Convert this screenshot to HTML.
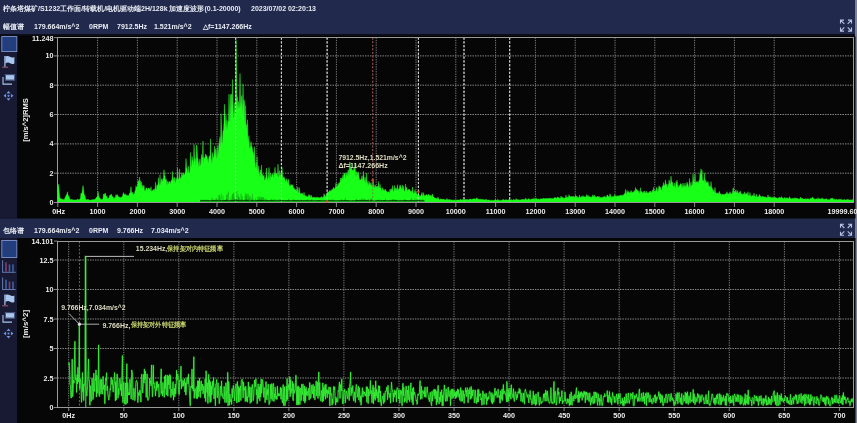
<!DOCTYPE html>
<html><head><meta charset="utf-8"><style>
html,body{margin:0;padding:0;width:857px;height:423px;overflow:hidden;background:#000;position:relative;font-family:"Liberation Sans",sans-serif}
.hd{position:absolute;left:0;width:857px;background:#212a4c}
.sb{position:absolute;left:0;width:17px;background:#171a32}
.t{position:absolute;white-space:nowrap;color:#e8ebf4;font-size:7px;line-height:10px;font-weight:bold;will-change:transform}
</style></head><body>
<div class="hd" style="top:0;height:34.3px"></div>
<div style="position:absolute;left:0;top:34.3px;width:857px;height:2.2px;background:#0c0d18"></div>
<div class="hd" style="top:218.4px;height:19.6px"></div>
<div class="sb" style="top:36.5px;height:182px"></div>
<div class="sb" style="top:238px;height:185px"></div>
<div style="position:absolute;left:855.3px;top:0;width:1.7px;height:423px;background:#7c8196"></div>
<svg width="857" height="423" viewBox="0 0 857 423" style="position:absolute;left:0;top:0;will-change:transform">
<style>
.g{stroke:#8c8c8c;stroke-width:1;stroke-dasharray:1.4 1.1}
.cur{stroke:#e4e4e4;stroke-width:1;stroke-dasharray:2.2 1.6}
.curr{stroke:#8c4a4a;stroke-width:1.1;stroke-dasharray:2 1.6}
.gv{stroke:#7c7c7c;stroke-width:1;stroke-dasharray:1.3 1.1}
text{font-family:"Liberation Sans",sans-serif;font-weight:bold}
</style>
<rect x="17" y="36.5" width="838.5" height="182" fill="#060606"/>
<line x1="57.5" y1="173.2" x2="853.5" y2="173.2" class="g"/><line x1="57.5" y1="143.9" x2="853.5" y2="143.9" class="g"/><line x1="57.5" y1="114.5" x2="853.5" y2="114.5" class="g"/><line x1="57.5" y1="85.2" x2="853.5" y2="85.2" class="g"/><line x1="57.5" y1="55.9" x2="853.5" y2="55.9" class="g"/><line x1="97.6" y1="37.5" x2="97.6" y2="202.5" class="gv"/><line x1="137.4" y1="37.5" x2="137.4" y2="202.5" class="gv"/><line x1="177.2" y1="37.5" x2="177.2" y2="202.5" class="gv"/><line x1="217.0" y1="37.5" x2="217.0" y2="202.5" class="gv"/><line x1="256.8" y1="37.5" x2="256.8" y2="202.5" class="gv"/><line x1="296.6" y1="37.5" x2="296.6" y2="202.5" class="gv"/><line x1="336.4" y1="37.5" x2="336.4" y2="202.5" class="gv"/><line x1="376.2" y1="37.5" x2="376.2" y2="202.5" class="gv"/><line x1="416.0" y1="37.5" x2="416.0" y2="202.5" class="gv"/><line x1="455.8" y1="37.5" x2="455.8" y2="202.5" class="gv"/><line x1="495.6" y1="37.5" x2="495.6" y2="202.5" class="gv"/><line x1="535.4" y1="37.5" x2="535.4" y2="202.5" class="gv"/><line x1="575.2" y1="37.5" x2="575.2" y2="202.5" class="gv"/><line x1="615.0" y1="37.5" x2="615.0" y2="202.5" class="gv"/><line x1="654.8" y1="37.5" x2="654.8" y2="202.5" class="gv"/><line x1="694.6" y1="37.5" x2="694.6" y2="202.5" class="gv"/><line x1="734.4" y1="37.5" x2="734.4" y2="202.5" class="gv"/><line x1="774.2" y1="37.5" x2="774.2" y2="202.5" class="gv"/>
<line x1="235.7" y1="37.5" x2="235.7" y2="202.5" class="cur"/><line x1="281.4" y1="37.5" x2="281.4" y2="202.5" class="cur"/><line x1="327.1" y1="37.5" x2="327.1" y2="202.5" class="cur"/><line x1="418.4" y1="37.5" x2="418.4" y2="202.5" class="cur"/><line x1="464.0" y1="37.5" x2="464.0" y2="202.5" class="cur"/><line x1="509.7" y1="37.5" x2="509.7" y2="202.5" class="cur"/><line x1="372.7" y1="37.5" x2="372.7" y2="202.5" class="curr"/>
<path d="M58 202.2L58 184.9L58.5 184.3L59 189.3L59.5 195.1L60 198.7L60.5 198.2L61 199.5L61.5 198.8L62 199L62.5 199.4L63 199.6L63.5 199.6L64 199.7L64.5 199.5L65 197.4L65.5 197.3L66 195.4L66.5 194.7L67 194L67.5 191.8L68 195.1L68.5 196.2L69 196.3L69.5 198.3L70 199.3L70.5 199.7L71 199.8L71.5 199.3L72 199.6L72.5 199.7L73 199.7L73.5 200L74 200.2L74.5 200L75 199.6L75.5 200L76 199.8L76.5 200.2L77 199.4L77.5 199.1L78 199.9L78.5 199.4L79 199.7L79.5 199.4L80 199.6L80.5 197.6L81 193.1L81.5 194.3L82 192.6L82.5 189.5L83 185.6L83.5 189L84 194.1L84.5 194.8L85 196.6L85.5 198.6L86 199.6L86.5 200L87 199.5L87.5 199.8L88 199.2L88.5 199.8L89 199.8L89.5 200.3L90 200L90.5 200.2L91 200L91.5 200.2L92 199.4L92.5 200.1L93 199.6L93.5 199.9L94 199.1L94.5 199.5L95 200L95.5 198.5L96 198.2L96.5 197.2L97 196.8L97.5 196.7L98 191.3L98.5 195L99 196.7L99.5 198.1L100 198L100.5 199.2L101 199.2L101.5 199.4L102 199.3L102.5 199.5L103 198.6L103.5 194L104 195.4L104.5 193.9L105 193.3L105.5 193.3L106 196.3L106.5 196.7L107 195.8L107.5 199.3L108 198.3L108.5 198.6L109 198L109.5 195.4L110 195.3L110.5 195.5L111 193.9L111.5 194.5L112 196.1L112.5 196.6L113 197L113.5 197.7L114 198.7L114.5 197.5L115 198.8L115.5 196.8L116 194.5L116.5 196.4L117 194.9L117.5 194.7L118 197.1L118.5 196.6L119 197.1L119.5 197.5L120 197.1L120.5 197.8L121 197.8L121.5 197L122 196.9L122.5 196.1L123 194.1L123.5 192.6L124 194.6L124.5 195.1L125 193.7L125.5 195.3L126 194.4L126.5 195.8L127 196.1L127.5 195.2L128 195.4L128.5 195.7L129 195.2L129.5 193.1L130 193.6L130.5 191L131 186.7L131.5 192.4L132 192.7L132.5 192.1L133 194.7L133.5 193.9L134 194.1L134.5 193.9L135 190.7L135.5 190.4L136 185.5L136.5 188L137 186.9L137.5 186.9L138 180.5L138.5 181.3L139 182.4L139.5 177L140 185.1L140.5 180.6L141 187.3L141.5 182.1L142 189L142.5 186.2L143 184.9L143.5 188.1L144 185.5L144.5 190.5L145 191.2L145.5 189.7L146 188.3L146.5 188.1L147 188.5L147.5 191.2L148 187.9L148.5 188.4L149 188.2L149.5 189.7L150 188.2L150.5 191.7L151 186.7L151.5 191.7L152 190.7L152.5 190.6L153 190.8L153.5 189.2L154 191.4L154.5 188.9L155 190.7L155.5 182.1L156 190.4L156.5 188.5L157 184.8L157.5 186.2L158 184.2L158.5 177.7L159 184.1L159.5 186L160 174.6L160.5 186.5L161 181.8L161.5 179.2L162 178.4L162.5 182.8L163 179.3L163.5 178.1L164 169.8L164.5 175.6L165 175.9L165.5 181.1L166 178.8L166.5 180.6L167 186L167.5 181.9L168 180.9L168.5 185L169 182.3L169.5 181.7L170 181.6L170.5 184.8L171 180.7L171.5 180.7L172 179.1L172.5 171.4L173 182L173.5 179L174 177.7L174.5 177.2L175 182.3L175.5 183L176 178L176.5 181.1L177 178L177.5 167.5L178 178.9L178.5 179.6L179 177.6L179.5 168.9L180 180L180.5 177.4L181 179.2L181.5 174.3L182 172.5L182.5 175.8L183 175.2L183.5 172.9L184 175.3L184.5 174.4L185 172.9L185.5 170.9L186 158.5L186.5 166.9L187 168.6L187.5 171.4L188 173.7L188.5 166.1L189 172.8L189.5 172.7L190 172.6L190.5 152.5L191 161.8L191.5 168.4L192 156.3L192.5 159.5L193 161.2L193.5 166L194 144.4L194.5 155.8L195 162.8L195.5 158.4L196 166.7L196.5 145.3L197 145.3L197.5 156.8L198 159.4L198.5 163.6L199 167.7L199.5 161.8L200 158.8L200.5 166.1L201 165L201.5 154.5L202 158.3L202.5 156.2L203 140.9L203.5 165.5L204 157.1L204.5 159.1L205 157.9L205.5 154L206 154.7L206.5 155.8L207 156.6L207.5 161.7L208 158.2L208.5 164.4L209 156.3L209.5 156.2L210 156.5L210.5 138.9L211 160.6L211.5 159.6L212 164.8L212.5 152.6L213 156.6L213.5 158.5L214 155.8L214.5 145.9L215 157.5L215.5 150.2L216 148.4L216.5 156.3L217 159.8L217.5 149.6L218 145.4L218.5 157L219 145.2L219.5 140.8L220 136.6L220.5 149.8L221 113.6L221.5 128.2L222 144.6L222.5 141.4L223 130.5L223.5 131.4L224 122.1L224.5 104.3L225 114.9L225.5 131.1L226 115.4L226.5 132.5L227 120.3L227.5 131L228 122L228.5 120.7L229 94L229.5 113.8L230 124.3L230.5 94.7L231 96.3L231.5 93.9L232 113.4L232.5 79.4L233 104L233.5 116L234 118.6L234.5 102.9L235 114.8L235.5 112.7L236 39.8L236.5 72.3L237 112.3L237.5 96.6L238 109.9L238.5 101.5L239 109.6L239.5 102.2L240 73.5L240.5 99.3L241 108.3L241.5 96.9L242 95.5L242.5 118L243 83.8L243.5 107.5L244 99.7L244.5 103.4L245 125.4L245.5 105.6L246 130.1L246.5 124.5L247 126.9L247.5 119.7L248 142.7L248.5 139L249 135.5L249.5 149L250 148L250.5 146.3L251 141.6L251.5 145.7L252 146.7L252.5 149.8L253 152.7L253.5 152.6L254 157.1L254.5 146.8L255 165.9L255.5 168.5L256 162.3L256.5 170.4L257 156.6L257.5 167.4L258 171.3L258.5 165.9L259 175L259.5 172.4L260 177.4L260.5 169.8L261 174.1L261.5 165.1L262 177.9L262.5 174.1L263 175.6L263.5 176.8L264 175L264.5 179.7L265 180.4L265.5 178.1L266 176.8L266.5 168L267 177.5L267.5 180.8L268 177.9L268.5 175.9L269 167.5L269.5 175.7L270 181.3L270.5 173.2L271 176.9L271.5 177.1L272 174.1L272.5 175.5L273 173.4L273.5 178.8L274 174.2L274.5 173.9L275 167.3L275.5 174.4L276 174.6L276.5 172.9L277 173.7L277.5 178.1L278 164L278.5 176.7L279 176.9L279.5 170.6L280 176.9L280.5 175.2L281 173.2L281.5 174.2L282 167.4L282.5 174.8L283 178.2L283.5 177.6L284 176.8L284.5 178.5L285 179.4L285.5 181.7L286 181.2L286.5 178.7L287 181.1L287.5 184L288 179.9L288.5 179.2L289 185L289.5 186.4L290 184.4L290.5 187.1L291 185.1L291.5 185.8L292 184.3L292.5 187L293 184.9L293.5 189.3L294 187.6L294.5 189.2L295 189.7L295.5 189.5L296 189.8L296.5 190.5L297 191.4L297.5 187.1L298 192.5L298.5 192.8L299 187.4L299.5 189.6L300 193.5L300.5 193.5L301 193.9L301.5 193.6L302 192.9L302.5 193.3L303 194.9L303.5 195.5L304 192.3L304.5 195.4L305 195.3L305.5 196.8L306 195.4L306.5 196.7L307 196.4L307.5 197.1L308 196.8L308.5 196.1L309 194.4L309.5 197L310 194.9L310.5 197.2L311 197.5L311.5 195.3L312 197.9L312.5 197.8L313 197.2L313.5 197.1L314 198.2L314.5 197.2L315 197L315.5 197.7L316 198.3L316.5 197.3L317 196.8L317.5 197.4L318 197.8L318.5 197.4L319 198.1L319.5 197.7L320 197.7L320.5 197.3L321 197.9L321.5 196.5L322 197.5L322.5 197.3L323 197.3L323.5 197.5L324 193.7L324.5 195L325 195.8L325.5 196.4L326 196.1L326.5 195.1L327 193.5L327.5 191.7L328 191.9L328.5 192.2L329 191.8L329.5 190.7L330 190.2L330.5 191.3L331 191.2L331.5 190L332 189.3L332.5 190.4L333 188.6L333.5 187.2L334 189.2L334.5 188.7L335 188.1L335.5 187.1L336 182.9L336.5 187.7L337 186.4L337.5 186.1L338 183.7L338.5 186L339 182.4L339.5 183.8L340 182.4L340.5 177.9L341 181.7L341.5 177.7L342 178.7L342.5 178.3L343 174.7L343.5 179.8L344 173.1L344.5 173L345 174.6L345.5 179.6L346 174L346.5 174.2L347 172.3L347.5 177.1L348 169.9L348.5 170.2L349 177.1L349.5 163.2L350 162L350.5 169.3L351 168.2L351.5 167.1L352 170.5L352.5 170.1L353 170L353.5 171.2L354 167.5L354.5 171.1L355 164.4L355.5 172L356 177.7L356.5 171.5L357 172.2L357.5 175.2L358 171.7L358.5 173.1L359 177.2L359.5 179.8L360 179.7L360.5 179.8L361 179.4L361.5 178.8L362 175.6L362.5 181.2L363 177.1L363.5 171.3L364 178.7L364.5 182.4L365 177L365.5 180.6L366 184.3L366.5 173.2L367 181.2L367.5 182.1L368 185.2L368.5 185L369 181.1L369.5 185.3L370 182.9L370.5 186.5L371 182.6L371.5 186.9L372 184.8L372.5 187.7L373 178.8L373.5 183.7L374 188.1L374.5 187.4L375 185L375.5 186.1L376 187.9L376.5 186.6L377 187.7L377.5 186L378 189L378.5 181.6L379 187.7L379.5 187.4L380 184.2L380.5 187.9L381 188.2L381.5 189.7L382 191.5L382.5 187.7L383 188.9L383.5 191.2L384 189.2L384.5 191.2L385 190.6L385.5 189.2L386 190.8L386.5 191.5L387 191.5L387.5 192.4L388 192L388.5 191.8L389 192.2L389.5 192.7L390 189L390.5 192L391 188.8L391.5 188.9L392 191.3L392.5 185.5L393 190L393.5 191.6L394 191.2L394.5 185.4L395 189.4L395.5 187.9L396 191L396.5 188.7L397 187.4L397.5 184.7L398 191.1L398.5 188.7L399 189.3L399.5 187.5L400 184.8L400.5 185.7L401 187.5L401.5 189.1L402 189.3L402.5 184.9L403 190.2L403.5 186.2L404 190.1L404.5 191.2L405 191.6L405.5 184L406 188.2L406.5 187.3L407 189.6L407.5 190.9L408 190L408.5 189.3L409 190L409.5 189.3L410 190.3L410.5 192L411 190.8L411.5 191.5L412 192.9L412.5 186.9L413 191.4L413.5 193.9L414 192.9L414.5 192.7L415 189.6L415.5 194.5L416 191.5L416.5 194.1L417 193.9L417.5 194.5L418 195.8L418.5 194.2L419 194.2L419.5 196.3L420 196.1L420.5 196.3L421 194.7L421.5 194.5L422 192.3L422.5 195.8L423 196L423.5 192.7L424 194.3L424.5 196.2L425 196L425.5 195.2L426 195L426.5 194.5L427 195.2L427.5 195.9L428 195.3L428.5 194L429 194.7L429.5 196.4L430 195L430.5 196.3L431 195.4L431.5 197.2L432 194.4L432.5 194L433 196.9L433.5 196.7L434 197.1L434.5 197.9L435 198.1L435.5 198L436 198.6L436.5 198.5L437 198.8L437.5 198.5L438 196.9L438.5 198.7L439 199.2L439.5 199.7L440 199.5L440.5 199.1L441 198.7L441.5 199.5L442 199.2L442.5 199.6L443 199.1L443.5 199.1L444 199.7L444.5 199.4L445 199.9L445.5 200L446 199.7L446.5 199.6L447 198.4L447.5 200.1L448 199.6L448.5 199.8L449 200.2L449.5 199.5L450 199.4L450.5 200.2L451 199.6L451.5 200.3L452 200.3L452.5 200.2L453 199.7L453.5 200.5L454 199.8L454.5 200.1L455 200.5L455.5 200.2L456 200.3L456.5 200.2L457 200L457.5 200L458 199.7L458.5 200.3L459 199.8L459.5 200.1L460 199.6L460.5 199.6L461 199.5L461.5 200.1L462 199.9L462.5 199.4L463 199.4L463.5 199.9L464 199.3L464.5 199.8L465 199.8L465.5 199.4L466 199.6L466.5 199.6L467 199.6L467.5 199.6L468 199.8L468.5 199.9L469 199.2L469.5 199.3L470 199.2L470.5 199L471 199.5L471.5 199.4L472 199.3L472.5 199.3L473 198.7L473.5 199.1L474 199.1L474.5 198.6L475 199.1L475.5 199.2L476 198.6L476.5 198.6L477 197.7L477.5 198.8L478 199.5L478.5 199.2L479 199L479.5 199.4L480 199.4L480.5 199.2L481 199.2L481.5 199.7L482 199.2L482.5 199.9L483 199.1L483.5 199.9L484 199.9L484.5 200L485 199.3L485.5 200L486 199.7L486.5 199.5L487 199.6L487.5 200.4L488 200L488.5 200L489 200L489.5 200.3L490 200.4L490.5 200.6L491 200.6L491.5 200.2L492 200.5L492.5 200.4L493 200.3L493.5 200.5L494 200.5L494.5 199.8L495 200.2L495.5 199.5L496 200L496.5 200.5L497 200.3L497.5 199.4L498 199.8L498.5 200L499 200.4L499.5 200.2L500 200.4L500.5 200.3L501 200.4L501.5 200.3L502 199.9L502.5 200.3L503 199.2L503.5 199.7L504 200.1L504.5 200.1L505 200.3L505.5 199.7L506 199.8L506.5 199.9L507 199.8L507.5 200.3L508 200.1L508.5 199.8L509 199.5L509.5 199.1L510 199.8L510.5 199.9L511 200.3L511.5 199.5L512 200.2L512.5 200.2L513 199.7L513.5 199.6L514 199.6L514.5 199.9L515 200.1L515.5 200.2L516 198.5L516.5 199.4L517 200L517.5 199.4L518 199.8L518.5 199.9L519 199.7L519.5 200.2L520 199.8L520.5 200L521 199.5L521.5 199.7L522 199.3L522.5 199.3L523 199.8L523.5 199.8L524 199.1L524.5 199.5L525 199.9L525.5 198.1L526 198.6L526.5 199.4L527 199.9L527.5 199.4L528 199.4L528.5 198.6L529 198.9L529.5 198.9L530 199.7L530.5 199.7L531 199.4L531.5 198.9L532 199.1L532.5 199L533 199.1L533.5 199.5L534 197.8L534.5 199.7L535 198.9L535.5 199.4L536 198.3L536.5 198.5L537 199L537.5 199.5L538 199.1L538.5 198.8L539 199.5L539.5 199.2L540 199.5L540.5 198.8L541 199L541.5 198.8L542 199.1L542.5 198.6L543 199.2L543.5 198.3L544 198.2L544.5 198.7L545 198.7L545.5 198.2L546 198.9L546.5 198.3L547 198.9L547.5 198.3L548 198.8L548.5 198.4L549 198L549.5 199.1L550 198.1L550.5 198.4L551 198.6L551.5 198.6L552 199L552.5 198.7L553 198.2L553.5 198.9L554 198.1L554.5 197.7L555 197.6L555.5 197.7L556 197.8L556.5 198.7L557 197.6L557.5 196.9L558 197.6L558.5 197.6L559 198L559.5 198.1L560 198.5L560.5 198L561 196.1L561.5 197.1L562 198.4L562.5 197.3L563 197.1L563.5 198.2L564 198.4L564.5 197.9L565 198.1L565.5 197.9L566 195.1L566.5 197.4L567 197.3L567.5 197.7L568 196.8L568.5 197.4L569 194.6L569.5 197L570 196.1L570.5 197.3L571 196.4L571.5 197.2L572 196.1L572.5 197.1L573 196.9L573.5 196.2L574 196.6L574.5 197.6L575 197.6L575.5 195.2L576 195.5L576.5 197.3L577 196.1L577.5 197.8L578 197.5L578.5 197.5L579 197.7L579.5 195L580 196.8L580.5 197.3L581 197.7L581.5 196.4L582 196.4L582.5 196.9L583 195.5L583.5 196.9L584 196.8L584.5 197.1L585 196.4L585.5 197.2L586 197L586.5 194.6L587 196.9L587.5 196.6L588 195L588.5 197.5L589 196.2L589.5 196.7L590 197.2L590.5 197.2L591 196.6L591.5 197.7L592 196.9L592.5 195.7L593 194.7L593.5 196.5L594 197.2L594.5 195.1L595 197.5L595.5 196.4L596 197.5L596.5 196.8L597 197.3L597.5 196.4L598 196.1L598.5 198L599 196.3L599.5 197L600 197.9L600.5 197.2L601 197.9L601.5 197L602 197.7L602.5 197.3L603 197.4L603.5 196.8L604 196.4L604.5 196.2L605 197.3L605.5 196.8L606 197.8L606.5 197.1L607 195.1L607.5 194.9L608 196.1L608.5 196.5L609 197.1L609.5 196.2L610 193.8L610.5 195.1L611 197.4L611.5 197.4L612 196.1L612.5 196.7L613 197.2L613.5 196.5L614 196.9L614.5 194.5L615 196L615.5 195.7L616 197.3L616.5 196.2L617 195.4L617.5 196.4L618 195.8L618.5 197.1L619 195.5L619.5 196.1L620 195.4L620.5 195.4L621 194.9L621.5 196.5L622 194.8L622.5 195.8L623 195.5L623.5 195.1L624 194.2L624.5 193.9L625 192.8L625.5 189.4L626 194.4L626.5 193.7L627 190.2L627.5 192.7L628 192.6L628.5 191.6L629 191.7L629.5 192.7L630 193.2L630.5 191.9L631 190.5L631.5 191.5L632 193.4L632.5 192.1L633 192.4L633.5 191.7L634 191.7L634.5 190.5L635 192.6L635.5 187.5L636 190.1L636.5 189.1L637 191.5L637.5 189.9L638 191.2L638.5 192.4L639 190.8L639.5 193.1L640 193.6L640.5 187.7L641 193.1L641.5 191.3L642 192.1L642.5 192.4L643 193.8L643.5 191.5L644 193.8L644.5 190.9L645 191.2L645.5 193.1L646 193.6L646.5 191.1L647 192.5L647.5 193.6L648 192.4L648.5 193.2L649 192.7L649.5 192L650 191L650.5 191.3L651 193.2L651.5 192L652 191.8L652.5 189.9L653 193L653.5 187.3L654 189.6L654.5 191.4L655 191.7L655.5 190.5L656 191.2L656.5 187.5L657 187.8L657.5 191.2L658 191.6L658.5 188.9L659 185.6L659.5 186.9L660 187.6L660.5 187.1L661 189.8L661.5 190.8L662 188.8L662.5 185.8L663 186.5L663.5 182.5L664 186.2L664.5 184.9L665 184.3L665.5 179.8L666 184.3L666.5 184.1L667 186.5L667.5 187.7L668 183.9L668.5 187L669 179.9L669.5 181.6L670 183.9L670.5 184.2L671 176.1L671.5 181.4L672 181.8L672.5 182.5L673 185.8L673.5 186.1L674 187.3L674.5 183L675 187.2L675.5 188.1L676 181.6L676.5 184.7L677 180.2L677.5 183.8L678 187.7L678.5 187.4L679 185L679.5 187.5L680 184.8L680.5 183.6L681 184.1L681.5 184.4L682 187.7L682.5 186.7L683 183L683.5 187.4L684 185.2L684.5 187.9L685 183L685.5 187.4L686 186.1L686.5 185.4L687 182L687.5 183.4L688 184.6L688.5 186.7L689 188.3L689.5 178.5L690 183.6L690.5 188.4L691 182L691.5 186.9L692 184.9L692.5 184.2L693 173.9L693.5 179.6L694 182.1L694.5 183.6L695 174.1L695.5 182.4L696 182.4L696.5 182.3L697 181.1L697.5 182.3L698 182.3L698.5 182.7L699 180.2L699.5 181L700 172.7L700.5 176.2L701 168.8L701.5 175.5L702 169.9L702.5 181L703 180L703.5 181.3L704 180.3L704.5 172.9L705 184.7L705.5 179.8L706 182.2L706.5 181.8L707 183.3L707.5 182.4L708 181.3L708.5 184.3L709 187.1L709.5 186.3L710 185.8L710.5 188.8L711 181.6L711.5 187.1L712 187.7L712.5 188.9L713 190.9L713.5 190.1L714 192.8L714.5 191.3L715 187.4L715.5 192.3L716 193.1L716.5 194L717 192.8L717.5 193.8L718 193.2L718.5 194.5L719 191.5L719.5 191.7L720 194.6L720.5 193.8L721 193.8L721.5 195.9L722 194L722.5 195.2L723 194L723.5 194.8L724 194.9L724.5 194.4L725 194.2L725.5 193.7L726 193.8L726.5 193.6L727 191.7L727.5 193.5L728 194.4L728.5 193.6L729 193.9L729.5 193.6L730 191.7L730.5 193.5L731 194.1L731.5 193.5L732 194.2L732.5 192.2L733 188.3L733.5 187.8L734 193.5L734.5 191.6L735 193.1L735.5 190.6L736 189.7L736.5 192.7L737 192.4L737.5 190.6L738 193.3L738.5 193.6L739 192.4L739.5 191.7L740 193.8L740.5 191L741 194.7L741.5 193.6L742 194.2L742.5 194.7L743 193.4L743.5 193.8L744 195.6L744.5 191.8L745 194.1L745.5 193.8L746 194.8L746.5 193L747 194L747.5 194.7L748 191.7L748.5 196L749 195.7L749.5 195.2L750 192.5L750.5 196.1L751 195.9L751.5 196.8L752 195.4L752.5 196L753 195.3L753.5 196.6L754 193L754.5 195.8L755 196.3L755.5 196.9L756 196.5L756.5 194.1L757 197.1L757.5 197.3L758 196.6L758.5 197.1L759 196.1L759.5 194.3L760 196L760.5 196.2L761 196.6L761.5 197.5L762 196.4L762.5 196.6L763 196.6L763.5 196.7L764 196.5L764.5 197.5L765 196.8L765.5 197.1L766 197.5L766.5 197.5L767 197.9L767.5 197.3L768 194.8L768.5 197.5L769 196.8L769.5 197.1L770 197.2L770.5 196.7L771 198L771.5 197.5L772 198.2L772.5 197.8L773 196.9L773.5 198.3L774 197.3L774.5 197.2L775 197.8L775.5 197.3L776 197.9L776.5 198.1L777 197.9L777.5 198.4L778 198.2L778.5 198.3L779 197.3L779.5 197.3L780 198.5L780.5 197.5L781 198.6L781.5 196.5L782 197.7L782.5 198L783 198.3L783.5 198.6L784 198.8L784.5 197.3L785 198.5L785.5 198.4L786 197.7L786.5 198.2L787 197.6L787.5 198L788 198.8L788.5 198.3L789 198.8L789.5 196.6L790 197.8L790.5 198.6L791 198.8L791.5 199L792 198.3L792.5 198.5L793 199.1L793.5 198.2L794 198.8L794.5 198.2L795 197.6L795.5 198.5L796 198.6L796.5 198.4L797 198L797.5 198.3L798 199.2L798.5 198.7L799 199L799.5 199.2L800 199.1L800.5 197.1L801 198.2L801.5 198.5L802 198.3L802.5 198.5L803 199L803.5 198.9L804 198.9L804.5 199.1L805 198.9L805.5 198.5L806 199.4L806.5 199.1L807 198.9L807.5 198.7L808 198.7L808.5 198.7L809 199.4L809.5 199.3L810 199.2L810.5 198L811 198.7L811.5 198.4L812 197.6L812.5 197.6L813 197.4L813.5 198.7L814 198.6L814.5 199L815 199.2L815.5 199.2L816 198.9L816.5 198.7L817 199.3L817.5 199.5L818 197.6L818.5 199.5L819 198.8L819.5 199L820 198.7L820.5 199.7L821 198.2L821.5 198.9L822 199.1L822.5 197.9L823 199.4L823.5 199.1L824 199.1L824.5 199.3L825 199.6L825.5 198.8L826 199.4L826.5 198.6L827 199.3L827.5 199.8L828 199.6L828.5 199.8L829 199.7L829.5 199.7L830 199.5L830.5 198.8L831 198.2L831.5 199.1L832 198L832.5 198.2L833 199.2L833.5 199.5L834 198.5L834.5 199.8L835 199.5L835.5 199.8L836 199.2L836.5 199.3L837 199.8L837.5 200.1L838 199.2L838.5 199.8L839 199.5L839.5 199.3L840 199.4L840.5 199.3L841 199.7L841.5 199.4L842 199.7L842.5 199.9L843 199.7L843.5 199.9L844 199.5L844.5 199.5L845 200.1L845.5 200.1L846 199.9L846.5 199.8L847 199.4L847.5 199.5L848 199.4L848.5 199.7L849 199.7L849.5 200.1L850 200L850.5 200.3L851 199.6L851.5 200.1L852 200.3L852.5 200.1L853 199L853.5 199.8L853.6 202.2Z" fill="#18ff18" stroke="#30ff30" stroke-width="0.4"/>
<path d="M212.2 201V197.5M214.0 201V200.8M216.4 201V197.9M217.6 201V201.0M218.8 201V195.1M219.4 201V195.0M220.0 201V197.1M221.2 201V193.7M223.0 201V195.6M224.8 201V199.9M226.0 201V200.4M226.6 201V194.9M227.2 201V193.8M228.4 201V191.7M230.8 201V198.4M232.0 201V195.8M232.6 201V193.6M233.2 201V194.2M233.8 201V192.6M234.4 201V198.1M236.2 201V199.1M236.8 201V190.9M238.0 201V194.1M238.6 201V196.7M239.2 201V197.1M241.0 201V193.7M241.6 201V199.2M242.2 201V196.0M244.0 201V200.4M245.2 201V195.2M245.8 201V193.2M246.4 201V195.5M247.0 201V194.0M247.6 201V199.8M248.2 201V193.8M248.8 201V198.5M249.4 201V196.0M250.6 201V196.8M251.2 201V200.2M251.8 201V199.0M252.4 201V193.9M253.0 201V198.6M254.2 201V200.9M255.4 201V198.5M257.8 201V197.0M259.0 201V196.1M259.6 201V197.8M260.2 201V200.0M260.8 201V196.7M261.4 201V197.0M262.0 201V199.6M262.6 201V197.0M263.2 201V197.6M263.8 201V197.4M265.0 201V199.2M265.6 201V199.6M266.2 201V198.7M267.4 201V201.0M268.6 201V200.0M269.2 201V199.9M271.6 201V198.9M272.2 201V200.1M273.4 201V199.2M274.0 201V200.2M275.2 201V199.0M278.2 201V199.2M280.0 201V199.3M281.2 201V200.8M288.4 201V200.5M289.0 201V199.1M290.8 201V200.7M292.6 201V200.8M294.4 201V200.4M335.8 201V200.4M341.4 201V199.3M345.4 201V198.1M347.0 201V200.6M356.6 201V198.9M359.0 201V200.7M361.4 201V199.2M362.2 201V198.0M363.8 201V198.7M366.2 201V200.0M367.0 201V200.2M368.6 201V199.0M371.0 201V198.1M371.8 201V200.0M377.4 201V199.8M379.0 201V199.2M385.4 201V198.6M391.0 201V199.5M392.6 201V199.4M394.2 201V200.6M395.0 201V200.0M395.8 201V199.7M399.0 201V200.8M404.6 201V200.8M406.2 201V200.1M407.0 201V200.1M411.8 201V198.0M414.2 201V200.8M415.0 201V198.3M418.2 201V199.9" stroke="#0a500a" stroke-width="0.6" opacity="0.6"/>
<path d="M200 201.4L200 199.8L201 200.3L202 199.7L203 200.0L204 200.1L205 199.8L206 200.2L207 199.8L208 200.1L209 200.0L210 200.2L211 200.2L212 199.7L213 199.9L214 200.1L215 199.8L216 199.7L217 200.3L218 199.6L219 200.4L220 199.9L221 200.2L222 200.2L223 200.0L224 199.9L225 200.1L226 199.8L227 199.6L228 200.3L229 200.2L230 199.9L231 200.1L232 200.1L233 200.0L234 199.8L235 199.7L236 199.6L237 199.7L238 200.1L239 199.7L240 199.8L241 200.3L242 199.6L243 200.2L244 199.9L245 199.8L246 199.7L247 199.9L248 199.6L249 200.4L250 200.4L251 200.2L252 199.9L253 200.1L254 200.3L255 200.2L256 199.9L257 200.1L258 199.8L259 200.0L260 199.7L261 199.8L262 200.0L263 200.1L264 200.2L265 200.2L266 200.1L267 200.1L268 200.3L269 200.0L270 200.3L271 199.7L272 200.0L273 200.3L274 200.1L275 200.2L276 200.3L277 200.0L278 200.3L279 200.3L280 199.8L281 200.1L282 199.9L283 200.0L284 200.0L285 200.2L286 200.1L287 200.0L288 200.1L289 199.7L290 200.2L291 200.2L292 200.1L293 199.8L294 199.7L295 199.9L296 200.1L297 199.9L298 199.7L299 200.2L300 199.9L301 199.8L302 200.1L303 200.3L304 199.9L305 200.2L306 200.1L307 200.0L308 199.6L309 200.3L310 200.3L311 200.0L312 199.6L313 200.4L314 199.9L315 200.4L316 200.0L317 200.3L318 199.9L319 200.1L320 199.9L321 200.2L322 200.3L323 200.3L324 200.2L325 200.3L326 200.2L327 200.0L328 200.0L329 199.7L330 200.0L331 200.0L332 199.8L333 199.7L334 199.9L335 200.4L336 200.0L337 200.4L338 199.9L339 200.3L340 200.0L341 200.3L342 199.7L343 200.3L344 199.9L345 199.8L346 200.2L347 199.9L348 200.1L349 200.2L350 200.2L351 200.4L352 199.9L353 200.3L354 200.2L355 200.3L356 199.8L357 200.0L358 200.0L359 199.9L360 199.8L361 199.9L362 200.0L363 200.1L364 200.0L365 199.6L366 199.9L367 200.0L368 199.7L369 200.4L370 200.3L371 199.8L372 199.6L373 200.4L374 200.4L375 200.4L376 199.9L377 200.3L378 200.0L379 199.9L380 200.4L381 199.7L382 200.2L383 200.0L384 200.1L385 200.1L386 200.1L387 200.4L388 200.1L389 200.2L390 200.1L391 200.3L392 200.1L393 199.8L394 199.6L395 200.2L396 199.7L397 199.9L398 200.3L399 200.4L400 199.7L401 200.2L402 200.3L403 199.9L404 199.8L405 199.7L406 200.0L407 200.2L408 200.1L409 200.2L410 199.9L411 199.6L412 200.3L413 200.1L414 200.1L415 200.3L416 199.9L417 199.6L418 200.2L419 199.8L420 199.7L421 200.2L422 199.7L423 199.8L424 199.9L425 201.4Z" fill="#031503" opacity="0.7"/>
<g opacity="0.55"><line x1="235.7" y1="37.5" x2="235.7" y2="202.5" class="cur"/><line x1="281.4" y1="37.5" x2="281.4" y2="202.5" class="cur"/><line x1="327.1" y1="37.5" x2="327.1" y2="202.5" class="cur"/><line x1="418.4" y1="37.5" x2="418.4" y2="202.5" class="cur"/><line x1="464.0" y1="37.5" x2="464.0" y2="202.5" class="cur"/><line x1="509.7" y1="37.5" x2="509.7" y2="202.5" class="cur"/><line x1="372.7" y1="37.5" x2="372.7" y2="202.5" class="curr"/></g>
<rect x="57.5" y="37.5" width="796.0" height="165.0" fill="none" stroke="#9a9a9a" stroke-width="1"/>
<circle cx="372.7" cy="180.2" r="1.3" fill="#d04020"/>
<circle cx="327.1" cy="201.5" r="1.2" fill="#d06020"/>
<circle cx="418.4" cy="191.8" r="1.2" fill="#d06020"/>
<text x="338.4" y="160.32" font-size="7.0" fill="#dedbc0" textLength="68.1" lengthAdjust="spacingAndGlyphs">7912.5Hz,1.521m/s^2</text>
<text x="338.4" y="168.22" font-size="7.0" fill="#dedbc0" textLength="49.4" lengthAdjust="spacingAndGlyphs">Δf=1147.266Hz</text>
<rect x="17" y="238" width="838.5" height="185" fill="#060606"/>
<line x1="57.5" y1="378.0" x2="853.5" y2="378.0" class="g"/><line x1="57.5" y1="348.5" x2="853.5" y2="348.5" class="g"/><line x1="57.5" y1="319.0" x2="853.5" y2="319.0" class="g"/><line x1="57.5" y1="289.5" x2="853.5" y2="289.5" class="g"/><line x1="57.5" y1="260.0" x2="853.5" y2="260.0" class="g"/><line x1="68.7" y1="241.5" x2="68.7" y2="407.5" class="gv"/><line x1="123.8" y1="241.5" x2="123.8" y2="407.5" class="gv"/><line x1="178.8" y1="241.5" x2="178.8" y2="407.5" class="gv"/><line x1="233.9" y1="241.5" x2="233.9" y2="407.5" class="gv"/><line x1="288.9" y1="241.5" x2="288.9" y2="407.5" class="gv"/><line x1="343.9" y1="241.5" x2="343.9" y2="407.5" class="gv"/><line x1="399.0" y1="241.5" x2="399.0" y2="407.5" class="gv"/><line x1="454.0" y1="241.5" x2="454.0" y2="407.5" class="gv"/><line x1="509.1" y1="241.5" x2="509.1" y2="407.5" class="gv"/><line x1="564.1" y1="241.5" x2="564.1" y2="407.5" class="gv"/><line x1="619.2" y1="241.5" x2="619.2" y2="407.5" class="gv"/><line x1="674.2" y1="241.5" x2="674.2" y2="407.5" class="gv"/><line x1="729.3" y1="241.5" x2="729.3" y2="407.5" class="gv"/><line x1="784.4" y1="241.5" x2="784.4" y2="407.5" class="gv"/><line x1="839.4" y1="241.5" x2="839.4" y2="407.5" class="gv"/>
<line x1="79.5" y1="241.5" x2="79.5" y2="407.5" class="curr"/>
<path d="M68.7 365L69.1 362.7L69.6 369.7L70 384.3L70.5 385.3L70.9 396.9L71.3 398L71.8 389.1L72.2 359.2L72.7 396.7L73.1 389.7L73.5 380.1L74 383.1L74.4 365.4L74.9 341.4L75.3 376.1L75.7 379.8L76.2 378.3L76.6 392.4L77.1 374.6L77.5 383.9L77.9 367.4L78.4 379.8L78.8 382.2L79.3 324.5L79.7 388.7L80.2 379.1L80.6 379.5L81 384L81.5 402.3L81.9 395.5L82.4 372.6L82.8 391.7L83.2 383.9L83.7 400.5L84.1 385L84.6 385.3L85 378.4L85.4 256L85.9 386.7L86.3 390.7L86.8 396L87.2 390.8L87.6 385.8L88.1 370.6L88.5 359.1L89 381L89.4 380.8L89.8 405.2L90.3 396.3L90.7 385.7L91.2 401.3L91.6 399.7L92 378.2L92.5 383.1L92.9 399.5L93.4 397.8L93.8 373.3L94.2 386.9L94.7 391.5L95.1 379.2L95.6 380.4L96 370L96.4 397L96.9 375.3L97.3 387.2L97.8 393.5L98.2 385.4L98.6 345L99.1 395.7L99.5 396.4L100 380.3L100.4 379.4L100.8 394L101.3 392.4L101.7 379.2L102.2 392.5L102.6 394.1L103.1 376.4L103.5 389.4L103.9 387.6L104.4 384.9L104.8 403.7L105.3 391.7L105.7 378.2L106.1 380.5L106.6 372.8L107 390.5L107.5 386L107.9 394.4L108.3 396.5L108.8 400L109.2 395.8L109.7 396.3L110.1 388.6L110.5 389.8L111 378.2L111.4 377.4L111.9 384.5L112.3 379.6L112.7 385.9L113.2 391.9L113.6 385.3L114.1 381.7L114.5 372.6L114.9 378.3L115.4 400.8L115.8 381.8L116.3 399.8L116.7 382.2L117.1 374L117.6 380.2L118 398.1L118.5 388.6L118.9 394.6L119.3 379.9L119.8 378.4L120.2 379.3L120.7 390.3L121.1 383.9L121.5 396L122 373.8L122.4 355.6L122.9 402.5L123.3 386.3L123.8 382.4L124.2 396.4L124.6 403.7L125.1 404.3L125.5 382.9L126 404.2L126.4 392.2L126.8 363.8L127.3 403.1L127.7 382.8L128.2 392.8L128.6 395L129 392.3L129.5 395L129.9 379.2L130.4 383.9L130.8 391.2L131.2 399L131.7 370L132.1 372L132.6 374.9L133 400L133.4 391.4L133.9 388.1L134.3 390.7L134.8 400.6L135.2 398.3L135.6 387.6L136.1 381.1L136.5 380.4L137 381.8L137.4 382.7L137.8 402.5L138.3 395.9L138.7 392.4L139.2 395.6L139.6 390.2L140 390.6L140.5 392.8L140.9 402L141.4 376.8L141.8 374.3L142.2 383.5L142.7 392.9L143.1 386.9L143.6 374.5L144 383.1L144.4 369L144.9 379.7L145.3 371L145.8 380.6L146.2 397.3L146.7 386.1L147.1 373.9L147.5 398.9L148 400.4L148.4 399.5L148.9 397.9L149.3 395.1L149.7 378.2L150.2 383.6L150.6 380.7L151.1 385.8L151.5 365L151.9 378.3L152.4 396.8L152.8 393.6L153.3 365.1L153.7 383.9L154.1 382.8L154.6 388.1L155 387.6L155.5 395.9L155.9 388.7L156.3 381.8L156.8 390.6L157.2 381.5L157.7 387.7L158.1 386.6L158.5 384.3L159 397.1L159.4 395.4L159.9 395.1L160.3 383.9L160.7 381L161.2 368.9L161.6 393.5L162.1 390.9L162.5 396.1L162.9 382.5L163.4 389.8L163.8 393.9L164.3 397.2L164.7 376.3L165.1 388.7L165.6 375L166 393.1L166.5 394.9L166.9 380.2L167.3 375.1L167.8 396.1L168.2 376.1L168.7 384.7L169.1 376L169.6 374.6L170 389.2L170.4 375.4L170.9 397.4L171.3 389.1L171.8 389.9L172.2 395.2L172.6 388.6L173.1 381.7L173.5 400.1L174 390.4L174.4 388.2L174.8 396.7L175.3 384.1L175.7 393.9L176.2 385.5L176.6 370.3L177 380.2L177.5 374.3L177.9 374.6L178.4 386.5L178.8 393L179.2 394.5L179.7 380.2L180.1 381.2L180.6 373L181 366.2L181.4 388.8L181.9 379.4L182.3 385.7L182.8 386.5L183.2 380.6L183.6 385.8L184.1 382.6L184.5 378.7L185 392L185.4 382.5L185.8 395L186.3 390.6L186.7 379.5L187.2 377.5L187.6 377.3L188 384L188.5 374L188.9 383.1L189.4 390.7L189.8 399.5L190.3 405.7L190.7 386.6L191.1 385.9L191.6 387.7L192 369.2L192.5 388.7L192.9 385L193.3 391.1L193.8 356.8L194.2 398.3L194.7 389.9L195.1 388.4L195.5 389.6L196 396.5L196.4 398.4L196.9 386.5L197.3 398.7L197.7 380.7L198.2 396.9L198.6 380.9L199.1 391.5L199.5 378.2L199.9 396.1L200.4 397.5L200.8 383.1L201.3 380.9L201.7 390.6L202.1 388.7L202.6 384.1L203 393.8L203.5 390.5L203.9 386.1L204.3 393L204.8 398.1L205.2 378.8L205.7 401.6L206.1 370.9L206.5 382.9L207 392.5L207.4 382.6L207.9 403.4L208.3 390.8L208.7 374.4L209.2 396.4L209.6 379.9L210.1 402.4L210.5 381.9L210.9 401.7L211.4 385.6L211.8 394.9L212.3 390.5L212.7 381.2L213.2 386.2L213.6 377.6L214 398.8L214.5 392.8L214.9 387.6L215.4 405.7L215.8 384L216.2 383.6L216.7 379.5L217.1 397.3L217.6 397.8L218 382.9L218.4 390.6L218.9 397.6L219.3 403.6L219.8 399.3L220.2 387.8L220.6 386L221.1 395.8L221.5 380.9L222 392.8L222.4 393.8L222.8 397.8L223.3 398.6L223.7 398.9L224.2 386.4L224.6 397.9L225 402.5L225.5 396.5L225.9 382.8L226.4 389.3L226.8 402.5L227.2 394.3L227.7 372.4L228.1 405.7L228.6 381.4L229 383.9L229.4 405.2L229.9 394.1L230.3 400.4L230.8 402.1L231.2 399.4L231.6 404.4L232.1 388.7L232.5 397.6L233 388.5L233.4 385.5L233.9 390.8L234.3 395.6L234.7 400.8L235.2 388.6L235.6 386.8L236.1 383.8L236.5 400L236.9 402.9L237.4 381.6L237.8 388.2L238.3 402L238.7 386.5L239.1 401.9L239.6 388L240 390.3L240.5 385.9L240.9 400.5L241.3 380.3L241.8 380L242.2 379.2L242.7 384.9L243.1 397.8L243.5 382L244 390.5L244.4 387.6L244.9 389.7L245.3 401.5L245.7 386.2L246.2 391.4L246.6 401.2L247.1 396.6L247.5 402.1L247.9 395.3L248.4 382L248.8 397.1L249.3 396.9L249.7 386.7L250.1 403.3L250.6 402.7L251 387.4L251.5 402.1L251.9 389.7L252.3 384.5L252.8 389.2L253.2 400.7L253.7 397.5L254.1 389.6L254.5 380L255 386.9L255.4 385.8L255.9 378.7L256.3 394.9L256.8 389.3L257.2 403.6L257.6 393.8L258.1 383.9L258.5 398.4L259 388.1L259.4 386.6L259.8 400.9L260.3 384L260.7 397L261.2 379L261.6 393.3L262 387.4L262.5 379.7L262.9 382.4L263.4 390.7L263.8 397.3L264.2 387.5L264.7 389.1L265.1 402.5L265.6 395.1L266 381.7L266.4 390.4L266.9 399.8L267.3 389.4L267.8 394.9L268.2 384.2L268.6 393.9L269.1 404.5L269.5 401.9L270 402.2L270.4 384.5L270.8 398.3L271.3 398.8L271.7 383.7L272.2 400.6L272.6 391.9L273 383.8L273.5 383.6L273.9 401.4L274.4 393.8L274.8 398.5L275.2 387.2L275.7 397L276.1 399.4L276.6 395.9L277 399.3L277.4 386.2L277.9 396.1L278.3 393.3L278.8 395.7L279.2 393.8L279.7 395.7L280.1 394.5L280.5 387.3L281 399.2L281.4 388L281.9 396.5L282.3 402.2L282.7 402.9L283.2 384.7L283.6 405.5L284.1 400.8L284.5 386.8L284.9 405.7L285.4 401.8L285.8 399.5L286.3 386L286.7 401.2L287.1 378.5L287.6 399.5L288 389.1L288.5 384.6L288.9 388.9L289.3 390.2L289.8 376.8L290.2 396.6L290.7 379.6L291.1 393.5L291.5 388.8L292 390.5L292.4 381.4L292.9 399L293.3 400.7L293.7 383.6L294.2 393.3L294.6 390.8L295.1 391.1L295.5 387.5L295.9 375.3L296.4 388.4L296.8 404.8L297.3 386.9L297.7 404.9L298.1 385.9L298.6 404.6L299 387.2L299.5 390L299.9 404.5L300.4 388.1L300.8 390.8L301.2 400.6L301.7 384.2L302.1 390.7L302.6 394.8L303 384.1L303.4 400.7L303.9 401L304.3 385.9L304.8 403L305.2 388.6L305.6 401.1L306.1 387.2L306.5 395.2L307 390.8L307.4 391.3L307.8 395.8L308.3 392L308.7 388.4L309.2 400L309.6 382.6L310 384.4L310.5 398.5L310.9 397.7L311.4 392.9L311.8 385.1L312.2 390.3L312.7 394L313.1 384.4L313.6 397.8L314 387.5L314.4 386.2L314.9 399.8L315.3 389.6L315.8 388.5L316.2 380.9L316.6 396L317.1 392.2L317.5 382.1L318 398.4L318.4 382.3L318.8 372.1L319.3 395.8L319.7 382.5L320.2 396.8L320.6 399.9L321 401.1L321.5 390.5L321.9 393.2L322.4 401.9L322.8 383L323.3 401.1L323.7 387.4L324.1 396.4L324.6 391L325 384.9L325.5 399.2L325.9 384.2L326.3 393.4L326.8 389.7L327.2 397.7L327.7 389.9L328.1 389.9L328.5 393.9L329 387L329.4 396.1L329.9 405.7L330.3 387.2L330.7 394.9L331.2 393.8L331.6 393.6L332.1 405.1L332.5 399L332.9 403.5L333.4 390.4L333.8 386.4L334.3 390.2L334.7 387.1L335.1 398.1L335.6 405L336 397.2L336.5 402.2L336.9 398.7L337.3 401.7L337.8 402.1L338.2 390.6L338.7 391.6L339.1 385.5L339.5 382.1L340 398.4L340.4 384.5L340.9 388.3L341.3 391L341.7 379L342.2 393.5L342.6 404L343.1 403.5L343.5 399.8L343.9 390.3L344.4 391.4L344.8 389.3L345.3 402.8L345.7 397.9L346.2 391.8L346.6 391L347 394.3L347.5 398.7L347.9 396.5L348.4 388L348.8 388.8L349.2 400.4L349.7 384.8L350.1 383.1L350.6 372.1L351 395.7L351.4 387.6L351.9 393.2L352.3 391.3L352.8 385.7L353.2 396.7L353.6 400.8L354.1 395.9L354.5 391.8L355 399.7L355.4 402.4L355.8 389L356.3 384.6L356.7 386.2L357.2 397.3L357.6 396L358 388.8L358.5 386.3L358.9 400L359.4 387.7L359.8 392.4L360.2 402.1L360.7 395.9L361.1 405.1L361.6 396.1L362 393.6L362.4 387.8L362.9 397.1L363.3 391.4L363.8 391.1L364.2 394.2L364.6 392L365.1 395.8L365.5 393.8L366 396.3L366.4 386.7L366.9 402.2L367.3 386.9L367.7 389L368.2 403.5L368.6 389.1L369.1 395.9L369.5 391.8L369.9 391.9L370.4 380.5L370.8 393.9L371.3 390.4L371.7 399.7L372.1 402.9L372.6 391.2L373 385.2L373.5 403.7L373.9 387.6L374.3 398.5L374.8 392.2L375.2 400.3L375.7 380.9L376.1 396L376.5 389.2L377 398.2L377.4 397.9L377.9 391.5L378.3 402L378.7 385.7L379.2 392.7L379.6 386L380.1 402.1L380.5 391.2L380.9 403.2L381.4 405.7L381.8 400L382.3 398.3L382.7 396.1L383.1 397.9L383.6 403.6L384 393.4L384.5 402.1L384.9 400.4L385.3 391.3L385.8 391.9L386.2 391.4L386.7 387.1L387.1 387.7L387.5 399.6L388 385.4L388.4 393.8L388.9 392.9L389.3 397.5L389.8 396L390.2 393.1L390.6 403.1L391.1 390L391.5 382.3L392 389.6L392.4 389.9L392.8 392.3L393.3 401.9L393.7 392.8L394.2 397.3L394.6 390.1L395 390.3L395.5 394.9L395.9 391L396.4 402L396.8 389.7L397.2 387.6L397.7 388.9L398.1 390.4L398.6 399L399 389.6L399.4 396.1L399.9 403.1L400.3 396.1L400.8 389.9L401.2 393.7L401.6 391.1L402.1 405.7L402.5 387.3L403 383.4L403.4 395.7L403.8 387.3L404.3 402.2L404.7 398.1L405.2 401.3L405.6 391L406 386L406.5 386.5L406.9 402.7L407.4 390L407.8 394.4L408.2 399.8L408.7 385.8L409.1 392.2L409.6 401.6L410 396.1L410.5 389.8L410.9 383L411.3 399.6L411.8 392.1L412.2 402.5L412.7 388.3L413.1 404.9L413.5 387.4L414 394.7L414.4 392.3L414.9 393.7L415.3 396.2L415.7 397.3L416.2 400.9L416.6 400L417.1 404.3L417.5 400.7L417.9 394L418.4 395.3L418.8 393.8L419.3 394.1L419.7 387L420.1 380.7L420.6 399.3L421 392.9L421.5 386.2L421.9 398.6L422.3 390.6L422.8 391.7L423.2 392.2L423.7 393.8L424.1 390.5L424.5 396.7L425 387.1L425.4 393.2L425.9 397.4L426.3 391.6L426.7 391L427.2 386.9L427.6 392.2L428.1 394.7L428.5 399.1L428.9 398.5L429.4 401.5L429.8 395.7L430.3 392.2L430.7 397.1L431.1 403.3L431.6 405.7L432 391.4L432.5 401.1L432.9 394.4L433.4 390.1L433.8 389.6L434.2 395.8L434.7 389.3L435.1 398.8L435.6 389.7L436 394.1L436.4 404.8L436.9 391.3L437.3 402.3L437.8 388.4L438.2 385.4L438.6 393.5L439.1 403.9L439.5 397L440 400.2L440.4 391.9L440.8 401.9L441.3 394.3L441.7 389.9L442.2 405.7L442.6 395.2L443 405.7L443.5 393.2L443.9 391.9L444.4 385L444.8 391.4L445.2 398.9L445.7 401.3L446.1 388.8L446.6 398.3L447 401.1L447.4 399L447.9 388.9L448.3 387.2L448.8 396.7L449.2 396.5L449.6 394.9L450.1 390.5L450.5 405.6L451 392.1L451.4 389.3L451.8 398.8L452.3 398L452.7 388.9L453.2 397.3L453.6 397.6L454 389.9L454.5 395.9L454.9 392.6L455.4 398.5L455.8 392.1L456.3 397.8L456.7 391.2L457.1 396.6L457.6 389.1L458 394.5L458.5 389.8L458.9 397.3L459.3 393.6L459.8 400.3L460.2 394.9L460.7 387.6L461.1 401.5L461.5 395.2L462 390.3L462.4 401.2L462.9 397L463.3 390.7L463.7 397.2L464.2 403.3L464.6 394.5L465.1 395.2L465.5 387.8L465.9 391.9L466.4 390.3L466.8 396.7L467.3 387.7L467.7 389.8L468.1 402.7L468.6 392.9L469 389.8L469.5 394.2L469.9 387.7L470.3 399.2L470.8 394.4L471.2 386.5L471.7 398.3L472.1 389.9L472.5 395.9L473 391.7L473.4 389.8L473.9 391.8L474.3 402.4L474.7 402.8L475.2 390L475.6 393.4L476.1 402.9L476.5 403.5L477 397.4L477.4 402.2L477.8 389.6L478.3 401.8L478.7 389.5L479.2 394.2L479.6 396.4L480 393.7L480.5 393.7L480.9 400L481.4 397.8L481.8 405L482.2 404.8L482.7 390.9L483.1 391.9L483.6 393.8L484 404.5L484.4 394.7L484.9 393.9L485.3 397.6L485.8 398.5L486.2 393.3L486.6 404.6L487.1 397.2L487.5 400.6L488 397.7L488.4 396.5L488.8 399.2L489.3 391.9L489.7 391.5L490.2 393.5L490.6 393.2L491 398.4L491.5 402.4L491.9 392.7L492.4 403.9L492.8 395.1L493.2 394.4L493.7 402.3L494.1 400.2L494.6 392.3L495 388.2L495.4 395.5L495.9 393.8L496.3 391.3L496.8 395.1L497.2 397.5L497.6 395.1L498.1 389.2L498.5 393.2L499 397.5L499.4 395.4L499.9 403L500.3 403L500.7 390.8L501.2 399.4L501.6 396.4L502.1 389L502.5 400.5L502.9 392.7L503.4 384.6L503.8 394L504.3 391.1L504.7 391.4L505.1 391.8L505.6 395.4L506 395.8L506.5 401.7L506.9 381.5L507.3 392.3L507.8 402L508.2 388.7L508.7 400.9L509.1 392.6L509.5 396.8L510 388L510.4 391.7L510.9 399.1L511.3 384.8L511.7 392.3L512.2 395L512.6 394.8L513.1 397.8L513.5 388.7L513.9 398.9L514.4 401.4L514.8 396.9L515.3 391.7L515.7 391.9L516.1 396.8L516.6 399.6L517 394.5L517.5 397.7L517.9 391.9L518.3 391.6L518.8 393.3L519.2 388.5L519.7 393.4L520.1 389.5L520.6 394.5L521 401.3L521.4 395.1L521.9 393.2L522.3 398.1L522.8 402.2L523.2 399.6L523.6 393L524.1 401L524.5 404.1L525 390.6L525.4 389.3L525.8 391.4L526.3 392.6L526.7 394L527.2 397.4L527.6 395.6L528 394.3L528.5 400.8L528.9 402.8L529.4 395.3L529.8 396.5L530.2 390.6L530.7 399.3L531.1 398.5L531.6 403.6L532 404.8L532.4 403.6L532.9 397.1L533.3 391.2L533.8 404L534.2 403.6L534.6 395.4L535.1 401.8L535.5 405.3L536 393.9L536.4 404.4L536.8 400L537.3 395.4L537.7 394.7L538.2 392.1L538.6 397.1L539 403.6L539.5 405.3L539.9 397L540.4 397.9L540.8 402L541.2 403.7L541.7 401.5L542.1 402.5L542.6 401.6L543 401.5L543.5 394.2L543.9 397.8L544.3 393.4L544.8 398.2L545.2 401.2L545.7 390.2L546.1 394.8L546.5 392.6L547 401.1L547.4 390.9L547.9 396.1L548.3 398.9L548.7 401.2L549.2 402.9L549.6 403.4L550.1 401.6L550.5 399.6L550.9 387.7L551.4 398.7L551.8 403.2L552.3 402L552.7 403.5L553.1 403.9L553.6 388.1L554 381.5L554.5 402.9L554.9 392.7L555.3 391.3L555.8 396.7L556.2 405.1L556.7 403.2L557.1 397.6L557.5 391.4L558 387.9L558.4 394.7L558.9 392L559.3 403.3L559.7 397.3L560.2 397.3L560.6 401L561.1 396.7L561.5 397L561.9 390.7L562.4 403.7L562.8 400.5L563.3 402.1L563.7 401.8L564.1 400.7L564.6 400L565 392.1L565.5 401.1L565.9 399.1L566.4 403.7L566.8 403.2L567.2 403.4L567.7 398.6L568.1 402.2L568.6 402.6L569 399.1L569.4 405.7L569.9 394.2L570.3 405L570.8 400L571.2 391.9L571.6 403.2L572.1 405.2L572.5 399.1L573 396L573.4 399.4L573.8 401.1L574.3 394.6L574.7 396.2L575.2 399L575.6 395L576 391.4L576.5 387.7L576.9 398.3L577.4 395L577.8 397.1L578.2 402.4L578.7 391.3L579.1 402.2L579.6 393.6L580 398L580.4 392.4L580.9 396.2L581.3 391.7L581.8 396L582.2 400.3L582.6 393.3L583.1 392.7L583.5 397.3L584 391.2L584.4 394.5L584.8 391.8L585.3 402.7L585.7 392.3L586.2 394.6L586.6 392L587.1 399.9L587.5 397.6L587.9 393.1L588.4 396.3L588.8 401.2L589.3 401.4L589.7 392.8L590.1 396.7L590.6 405.2L591 402.4L591.5 397.6L591.9 402.4L592.3 398.2L592.8 395.9L593.2 403.9L593.7 400.7L594.1 391.9L594.5 403.2L595 401.7L595.4 392.1L595.9 394.8L596.3 398L596.7 392.7L597.2 401.8L597.6 405.3L598.1 393.8L598.5 396.8L598.9 401.5L599.4 398.2L599.8 405.4L600.3 401.8L600.7 398.7L601.1 394.8L601.6 401.8L602 405.7L602.5 405.3L602.9 401.8L603.3 397.6L603.8 396L604.2 397L604.7 393.6L605.1 396L605.5 396.3L606 396.4L606.4 395.5L606.9 394.6L607.3 390.7L607.7 402.1L608.2 395.3L608.6 402.4L609.1 401.8L609.5 391.6L610 399.2L610.4 397L610.8 402.6L611.3 398.7L611.7 404.8L612.2 397.4L612.6 392.5L613 396.3L613.5 396.6L613.9 398.5L614.4 402.5L614.8 396.4L615.2 401.9L615.7 402.5L616.1 399.9L616.6 394L617 396.9L617.4 397.4L617.9 404.3L618.3 393.8L618.8 399L619.2 395.8L619.6 397.2L620.1 393.6L620.5 403.7L621 403.1L621.4 401.6L621.8 403.2L622.3 397.9L622.7 405.4L623.2 405.7L623.6 400.5L624 405.7L624.5 397.1L624.9 403.3L625.4 403.5L625.8 399.2L626.2 393.7L626.7 403L627.1 403.2L627.6 400.6L628 394.9L628.4 393L628.9 402.5L629.3 403.4L629.8 399.8L630.2 399.6L630.7 393.3L631.1 394.7L631.5 394L632 398.9L632.4 398.6L632.9 392.4L633.3 405.4L633.7 405.7L634.2 405.7L634.6 395.4L635.1 398.7L635.5 396.1L635.9 396.6L636.4 393.9L636.8 397.2L637.3 399.1L637.7 401.6L638.1 397.2L638.6 400.7L639 391.6L639.5 389L639.9 401.4L640.3 398.5L640.8 399.2L641.2 398.1L641.7 393.3L642.1 401.5L642.5 397.2L643 398.7L643.4 392.4L643.9 401.5L644.3 396L644.7 404.1L645.2 397.6L645.6 393.3L646.1 396.9L646.5 405.5L646.9 392.6L647.4 398.3L647.8 397.9L648.3 392.7L648.7 397.1L649.1 402.3L649.6 399L650 394.8L650.5 399.4L650.9 402L651.3 399.2L651.8 403.4L652.2 403.9L652.7 403.7L653.1 397.9L653.6 400.2L654 402.1L654.4 395.4L654.9 397.3L655.3 394.6L655.8 403L656.2 396.7L656.6 400.8L657.1 398.3L657.5 398.5L658 396.3L658.4 396.2L658.8 391.7L659.3 395.7L659.7 399.5L660.2 393.8L660.6 402.9L661 394.7L661.5 397.8L661.9 402.1L662.4 395.5L662.8 405L663.2 405.7L663.7 403.1L664.1 400L664.6 398.3L665 402.6L665.4 398.7L665.9 394.2L666.3 394.2L666.8 396.8L667.2 402.9L667.6 399.9L668.1 395.7L668.5 394.6L669 394L669.4 400.7L669.8 401L670.3 401.6L670.7 396.1L671.2 393.4L671.6 398.8L672 400.4L672.5 397.7L672.9 400.4L673.4 399.6L673.8 404.9L674.2 405.7L674.7 401.6L675.1 403L675.6 404.2L676 393.9L676.5 397L676.9 401.1L677.3 392.6L677.8 403.7L678.2 400.2L678.7 393L679.1 392.5L679.5 394.8L680 402.5L680.4 397.7L680.9 404L681.3 404.4L681.7 393.6L682.2 404.8L682.6 403.8L683.1 402.7L683.5 395.3L683.9 396.4L684.4 401.2L684.8 398.9L685.3 392.1L685.7 401.8L686.1 403.4L686.6 393L687 403.3L687.5 391.8L687.9 401.1L688.3 404.4L688.8 396.5L689.2 395.8L689.7 401.2L690.1 402.9L690.5 392.4L691 401.2L691.4 401.6L691.9 399.6L692.3 401.3L692.7 401.2L693.2 389.5L693.6 402.9L694.1 393.7L694.5 397.9L694.9 404.6L695.4 403.2L695.8 397.1L696.3 398.2L696.7 401.9L697.2 401.5L697.6 393.6L698 396.4L698.5 397.5L698.9 394.5L699.4 403.3L699.8 402.2L700.2 395.7L700.7 401.5L701.1 402L701.6 396.8L702 394.7L702.4 396.3L702.9 396.9L703.3 400.3L703.8 397.5L704.2 403.9L704.6 402.9L705.1 403.7L705.5 398L706 394.5L706.4 396.4L706.8 403.7L707.3 399.9L707.7 403.6L708.2 397L708.6 390.9L709 404.5L709.5 403.8L709.9 405.7L710.4 402.8L710.8 402.4L711.2 400.2L711.7 397L712.1 393.9L712.6 395.1L713 397.6L713.4 400.5L713.9 403.3L714.3 398L714.8 404.5L715.2 404.8L715.6 397.6L716.1 403.5L716.5 394.9L717 397.6L717.4 399.1L717.8 393.9L718.3 404.2L718.7 402.1L719.2 399.3L719.6 393.6L720.1 404.9L720.5 399.1L720.9 394.7L721.4 404.5L721.8 397L722.3 397.4L722.7 401.7L723.1 400L723.6 395.3L724 400.8L724.5 400.4L724.9 398.5L725.3 405L725.8 396.1L726.2 405.5L726.7 393.5L727.1 393.3L727.5 395.3L728 394L728.4 397.7L728.9 401.6L729.3 397.8L729.7 397L730.2 403.3L730.6 396L731.1 402.5L731.5 399.8L731.9 402.9L732.4 402.2L732.8 395.4L733.3 396.9L733.7 405.5L734.1 396.4L734.6 394L735 396.4L735.5 396.4L735.9 401.7L736.3 397.5L736.8 401.2L737.2 394.5L737.7 396.9L738.1 401.9L738.5 394.8L739 395.5L739.4 402.1L739.9 402.4L740.3 404.5L740.8 395.3L741.2 404L741.6 401.8L742.1 396.6L742.5 401.8L743 402.2L743.4 405.2L743.8 405L744.3 398.7L744.7 404.2L745.2 393.8L745.6 405.1L746 400.7L746.5 403L746.9 395L747.4 396.5L747.8 404.3L748.2 390.1L748.7 404.4L749.1 397.3L749.6 396.9L750 399L750.4 400.2L750.9 400.7L751.3 400L751.8 405.7L752.2 397.6L752.6 397.7L753.1 398.5L753.5 403.7L754 404L754.4 395.3L754.8 395.5L755.3 397.5L755.7 396.9L756.2 401.1L756.6 396L757 397.7L757.5 401.4L757.9 398.4L758.4 405.5L758.8 401.8L759.2 396.2L759.7 401.3L760.1 400.1L760.6 400L761 395.7L761.4 404.4L761.9 398.4L762.3 401.2L762.8 403.4L763.2 405.7L763.7 398.3L764.1 403.7L764.5 398.8L765 401.2L765.4 401.4L765.9 395.5L766.3 405.2L766.7 399.6L767.2 401.7L767.6 404.9L768.1 402.2L768.5 397.2L768.9 404.4L769.4 398.5L769.8 403.5L770.3 399.6L770.7 399.4L771.1 405L771.6 396.1L772 400.7L772.5 402.2L772.9 401.8L773.3 392.9L773.8 393L774.2 390.8L774.7 401.2L775.1 395.7L775.5 404.4L776 395.4L776.4 405.2L776.9 405.7L777.3 392.7L777.7 401.1L778.2 405.7L778.6 402.8L779.1 395.2L779.5 396.8L779.9 404.7L780.4 396.1L780.8 400.4L781.3 393.7L781.7 401.1L782.1 401.3L782.6 398.2L783 399.9L783.5 402.3L783.9 399.7L784.4 398.1L784.8 401L785.2 395.7L785.7 397.2L786.1 397.2L786.6 397.7L787 402.7L787.4 397.3L787.9 403.1L788.3 403.4L788.8 400.4L789.2 404.2L789.6 404.3L790.1 399.2L790.5 394.4L791 404.7L791.4 400.5L791.8 404.6L792.3 399.1L792.7 397.9L793.2 398.8L793.6 403.9L794 396.4L794.5 399.3L794.9 398.6L795.4 397.2L795.8 394.5L796.2 400.4L796.7 395.3L797.1 403.8L797.6 400.7L798 403.5L798.4 400.9L798.9 394.8L799.3 394.5L799.8 400.6L800.2 402.4L800.6 401.5L801.1 393.6L801.5 400.1L802 403.4L802.4 396.1L802.8 399.8L803.3 400.7L803.7 394.9L804.2 397L804.6 405.6L805 394L805.5 400.8L805.9 404L806.4 395.5L806.8 394.6L807.3 398.1L807.7 397.1L808.1 403.2L808.6 394.6L809 398.5L809.5 404.6L809.9 398.7L810.3 404.6L810.8 394.5L811.2 397.4L811.7 401L812.1 396.6L812.5 396.8L813 398.4L813.4 403.6L813.9 405.5L814.3 397.4L814.7 396.8L815.2 402.7L815.6 402.6L816.1 402.6L816.5 403.8L816.9 396.5L817.4 400.6L817.8 398.1L818.3 399.2L818.7 404.8L819.1 405.4L819.6 404L820 399.7L820.5 398.3L820.9 394.8L821.3 395.5L821.8 397.2L822.2 401L822.7 401.3L823.1 397.5L823.5 401.9L824 397.5L824.4 397.9L824.9 404.2L825.3 397.6L825.7 405.7L826.2 403.2L826.6 396.2L827.1 399.6L827.5 397.6L827.9 396.8L828.4 404.1L828.8 398.4L829.3 403.1L829.7 405.7L830.2 405.7L830.6 405.7L831 400.3L831.5 399.5L831.9 397.3L832.4 403.7L832.8 398.3L833.2 403.4L833.7 402.8L834.1 399L834.6 402.1L835 395.2L835.4 402.5L835.9 403L836.3 395.4L836.8 395.3L837.2 402.8L837.6 400.8L838.1 398.8L838.5 403.5L839 400.3L839.4 395.7L839.8 395.9L840.3 403L840.7 401.5L841.2 402.1L841.6 397.7L842 404.1L842.5 395.4L842.9 404.8L843.4 392.6L843.8 399.4L844.2 396.6L844.7 399.9L845.1 396.8L845.6 400.3L846 403.5L846.4 401.2L846.9 399.4L847.3 399.8L847.8 397.7L848.2 400.4L848.6 402.3L849.1 401.2L849.5 401.3L850 405.7L850.4 403.1L850.9 400.4L851.3 399.3L851.7 401.9L852.2 398.5L852.6 401.1L853.1 402.7" fill="none" stroke="#1a9a1a" stroke-width="2" stroke-linejoin="round" opacity="0.3"/>
<path d="M68.7 365L69.1 362.7L69.6 369.7L70 384.3L70.5 385.3L70.9 396.9L71.3 398L71.8 389.1L72.2 359.2L72.7 396.7L73.1 389.7L73.5 380.1L74 383.1L74.4 365.4L74.9 341.4L75.3 376.1L75.7 379.8L76.2 378.3L76.6 392.4L77.1 374.6L77.5 383.9L77.9 367.4L78.4 379.8L78.8 382.2L79.3 324.5L79.7 388.7L80.2 379.1L80.6 379.5L81 384L81.5 402.3L81.9 395.5L82.4 372.6L82.8 391.7L83.2 383.9L83.7 400.5L84.1 385L84.6 385.3L85 378.4L85.4 256L85.9 386.7L86.3 390.7L86.8 396L87.2 390.8L87.6 385.8L88.1 370.6L88.5 359.1L89 381L89.4 380.8L89.8 405.2L90.3 396.3L90.7 385.7L91.2 401.3L91.6 399.7L92 378.2L92.5 383.1L92.9 399.5L93.4 397.8L93.8 373.3L94.2 386.9L94.7 391.5L95.1 379.2L95.6 380.4L96 370L96.4 397L96.9 375.3L97.3 387.2L97.8 393.5L98.2 385.4L98.6 345L99.1 395.7L99.5 396.4L100 380.3L100.4 379.4L100.8 394L101.3 392.4L101.7 379.2L102.2 392.5L102.6 394.1L103.1 376.4L103.5 389.4L103.9 387.6L104.4 384.9L104.8 403.7L105.3 391.7L105.7 378.2L106.1 380.5L106.6 372.8L107 390.5L107.5 386L107.9 394.4L108.3 396.5L108.8 400L109.2 395.8L109.7 396.3L110.1 388.6L110.5 389.8L111 378.2L111.4 377.4L111.9 384.5L112.3 379.6L112.7 385.9L113.2 391.9L113.6 385.3L114.1 381.7L114.5 372.6L114.9 378.3L115.4 400.8L115.8 381.8L116.3 399.8L116.7 382.2L117.1 374L117.6 380.2L118 398.1L118.5 388.6L118.9 394.6L119.3 379.9L119.8 378.4L120.2 379.3L120.7 390.3L121.1 383.9L121.5 396L122 373.8L122.4 355.6L122.9 402.5L123.3 386.3L123.8 382.4L124.2 396.4L124.6 403.7L125.1 404.3L125.5 382.9L126 404.2L126.4 392.2L126.8 363.8L127.3 403.1L127.7 382.8L128.2 392.8L128.6 395L129 392.3L129.5 395L129.9 379.2L130.4 383.9L130.8 391.2L131.2 399L131.7 370L132.1 372L132.6 374.9L133 400L133.4 391.4L133.9 388.1L134.3 390.7L134.8 400.6L135.2 398.3L135.6 387.6L136.1 381.1L136.5 380.4L137 381.8L137.4 382.7L137.8 402.5L138.3 395.9L138.7 392.4L139.2 395.6L139.6 390.2L140 390.6L140.5 392.8L140.9 402L141.4 376.8L141.8 374.3L142.2 383.5L142.7 392.9L143.1 386.9L143.6 374.5L144 383.1L144.4 369L144.9 379.7L145.3 371L145.8 380.6L146.2 397.3L146.7 386.1L147.1 373.9L147.5 398.9L148 400.4L148.4 399.5L148.9 397.9L149.3 395.1L149.7 378.2L150.2 383.6L150.6 380.7L151.1 385.8L151.5 365L151.9 378.3L152.4 396.8L152.8 393.6L153.3 365.1L153.7 383.9L154.1 382.8L154.6 388.1L155 387.6L155.5 395.9L155.9 388.7L156.3 381.8L156.8 390.6L157.2 381.5L157.7 387.7L158.1 386.6L158.5 384.3L159 397.1L159.4 395.4L159.9 395.1L160.3 383.9L160.7 381L161.2 368.9L161.6 393.5L162.1 390.9L162.5 396.1L162.9 382.5L163.4 389.8L163.8 393.9L164.3 397.2L164.7 376.3L165.1 388.7L165.6 375L166 393.1L166.5 394.9L166.9 380.2L167.3 375.1L167.8 396.1L168.2 376.1L168.7 384.7L169.1 376L169.6 374.6L170 389.2L170.4 375.4L170.9 397.4L171.3 389.1L171.8 389.9L172.2 395.2L172.6 388.6L173.1 381.7L173.5 400.1L174 390.4L174.4 388.2L174.8 396.7L175.3 384.1L175.7 393.9L176.2 385.5L176.6 370.3L177 380.2L177.5 374.3L177.9 374.6L178.4 386.5L178.8 393L179.2 394.5L179.7 380.2L180.1 381.2L180.6 373L181 366.2L181.4 388.8L181.9 379.4L182.3 385.7L182.8 386.5L183.2 380.6L183.6 385.8L184.1 382.6L184.5 378.7L185 392L185.4 382.5L185.8 395L186.3 390.6L186.7 379.5L187.2 377.5L187.6 377.3L188 384L188.5 374L188.9 383.1L189.4 390.7L189.8 399.5L190.3 405.7L190.7 386.6L191.1 385.9L191.6 387.7L192 369.2L192.5 388.7L192.9 385L193.3 391.1L193.8 356.8L194.2 398.3L194.7 389.9L195.1 388.4L195.5 389.6L196 396.5L196.4 398.4L196.9 386.5L197.3 398.7L197.7 380.7L198.2 396.9L198.6 380.9L199.1 391.5L199.5 378.2L199.9 396.1L200.4 397.5L200.8 383.1L201.3 380.9L201.7 390.6L202.1 388.7L202.6 384.1L203 393.8L203.5 390.5L203.9 386.1L204.3 393L204.8 398.1L205.2 378.8L205.7 401.6L206.1 370.9L206.5 382.9L207 392.5L207.4 382.6L207.9 403.4L208.3 390.8L208.7 374.4L209.2 396.4L209.6 379.9L210.1 402.4L210.5 381.9L210.9 401.7L211.4 385.6L211.8 394.9L212.3 390.5L212.7 381.2L213.2 386.2L213.6 377.6L214 398.8L214.5 392.8L214.9 387.6L215.4 405.7L215.8 384L216.2 383.6L216.7 379.5L217.1 397.3L217.6 397.8L218 382.9L218.4 390.6L218.9 397.6L219.3 403.6L219.8 399.3L220.2 387.8L220.6 386L221.1 395.8L221.5 380.9L222 392.8L222.4 393.8L222.8 397.8L223.3 398.6L223.7 398.9L224.2 386.4L224.6 397.9L225 402.5L225.5 396.5L225.9 382.8L226.4 389.3L226.8 402.5L227.2 394.3L227.7 372.4L228.1 405.7L228.6 381.4L229 383.9L229.4 405.2L229.9 394.1L230.3 400.4L230.8 402.1L231.2 399.4L231.6 404.4L232.1 388.7L232.5 397.6L233 388.5L233.4 385.5L233.9 390.8L234.3 395.6L234.7 400.8L235.2 388.6L235.6 386.8L236.1 383.8L236.5 400L236.9 402.9L237.4 381.6L237.8 388.2L238.3 402L238.7 386.5L239.1 401.9L239.6 388L240 390.3L240.5 385.9L240.9 400.5L241.3 380.3L241.8 380L242.2 379.2L242.7 384.9L243.1 397.8L243.5 382L244 390.5L244.4 387.6L244.9 389.7L245.3 401.5L245.7 386.2L246.2 391.4L246.6 401.2L247.1 396.6L247.5 402.1L247.9 395.3L248.4 382L248.8 397.1L249.3 396.9L249.7 386.7L250.1 403.3L250.6 402.7L251 387.4L251.5 402.1L251.9 389.7L252.3 384.5L252.8 389.2L253.2 400.7L253.7 397.5L254.1 389.6L254.5 380L255 386.9L255.4 385.8L255.9 378.7L256.3 394.9L256.8 389.3L257.2 403.6L257.6 393.8L258.1 383.9L258.5 398.4L259 388.1L259.4 386.6L259.8 400.9L260.3 384L260.7 397L261.2 379L261.6 393.3L262 387.4L262.5 379.7L262.9 382.4L263.4 390.7L263.8 397.3L264.2 387.5L264.7 389.1L265.1 402.5L265.6 395.1L266 381.7L266.4 390.4L266.9 399.8L267.3 389.4L267.8 394.9L268.2 384.2L268.6 393.9L269.1 404.5L269.5 401.9L270 402.2L270.4 384.5L270.8 398.3L271.3 398.8L271.7 383.7L272.2 400.6L272.6 391.9L273 383.8L273.5 383.6L273.9 401.4L274.4 393.8L274.8 398.5L275.2 387.2L275.7 397L276.1 399.4L276.6 395.9L277 399.3L277.4 386.2L277.9 396.1L278.3 393.3L278.8 395.7L279.2 393.8L279.7 395.7L280.1 394.5L280.5 387.3L281 399.2L281.4 388L281.9 396.5L282.3 402.2L282.7 402.9L283.2 384.7L283.6 405.5L284.1 400.8L284.5 386.8L284.9 405.7L285.4 401.8L285.8 399.5L286.3 386L286.7 401.2L287.1 378.5L287.6 399.5L288 389.1L288.5 384.6L288.9 388.9L289.3 390.2L289.8 376.8L290.2 396.6L290.7 379.6L291.1 393.5L291.5 388.8L292 390.5L292.4 381.4L292.9 399L293.3 400.7L293.7 383.6L294.2 393.3L294.6 390.8L295.1 391.1L295.5 387.5L295.9 375.3L296.4 388.4L296.8 404.8L297.3 386.9L297.7 404.9L298.1 385.9L298.6 404.6L299 387.2L299.5 390L299.9 404.5L300.4 388.1L300.8 390.8L301.2 400.6L301.7 384.2L302.1 390.7L302.6 394.8L303 384.1L303.4 400.7L303.9 401L304.3 385.9L304.8 403L305.2 388.6L305.6 401.1L306.1 387.2L306.5 395.2L307 390.8L307.4 391.3L307.8 395.8L308.3 392L308.7 388.4L309.2 400L309.6 382.6L310 384.4L310.5 398.5L310.9 397.7L311.4 392.9L311.8 385.1L312.2 390.3L312.7 394L313.1 384.4L313.6 397.8L314 387.5L314.4 386.2L314.9 399.8L315.3 389.6L315.8 388.5L316.2 380.9L316.6 396L317.1 392.2L317.5 382.1L318 398.4L318.4 382.3L318.8 372.1L319.3 395.8L319.7 382.5L320.2 396.8L320.6 399.9L321 401.1L321.5 390.5L321.9 393.2L322.4 401.9L322.8 383L323.3 401.1L323.7 387.4L324.1 396.4L324.6 391L325 384.9L325.5 399.2L325.9 384.2L326.3 393.4L326.8 389.7L327.2 397.7L327.7 389.9L328.1 389.9L328.5 393.9L329 387L329.4 396.1L329.9 405.7L330.3 387.2L330.7 394.9L331.2 393.8L331.6 393.6L332.1 405.1L332.5 399L332.9 403.5L333.4 390.4L333.8 386.4L334.3 390.2L334.7 387.1L335.1 398.1L335.6 405L336 397.2L336.5 402.2L336.9 398.7L337.3 401.7L337.8 402.1L338.2 390.6L338.7 391.6L339.1 385.5L339.5 382.1L340 398.4L340.4 384.5L340.9 388.3L341.3 391L341.7 379L342.2 393.5L342.6 404L343.1 403.5L343.5 399.8L343.9 390.3L344.4 391.4L344.8 389.3L345.3 402.8L345.7 397.9L346.2 391.8L346.6 391L347 394.3L347.5 398.7L347.9 396.5L348.4 388L348.8 388.8L349.2 400.4L349.7 384.8L350.1 383.1L350.6 372.1L351 395.7L351.4 387.6L351.9 393.2L352.3 391.3L352.8 385.7L353.2 396.7L353.6 400.8L354.1 395.9L354.5 391.8L355 399.7L355.4 402.4L355.8 389L356.3 384.6L356.7 386.2L357.2 397.3L357.6 396L358 388.8L358.5 386.3L358.9 400L359.4 387.7L359.8 392.4L360.2 402.1L360.7 395.9L361.1 405.1L361.6 396.1L362 393.6L362.4 387.8L362.9 397.1L363.3 391.4L363.8 391.1L364.2 394.2L364.6 392L365.1 395.8L365.5 393.8L366 396.3L366.4 386.7L366.9 402.2L367.3 386.9L367.7 389L368.2 403.5L368.6 389.1L369.1 395.9L369.5 391.8L369.9 391.9L370.4 380.5L370.8 393.9L371.3 390.4L371.7 399.7L372.1 402.9L372.6 391.2L373 385.2L373.5 403.7L373.9 387.6L374.3 398.5L374.8 392.2L375.2 400.3L375.7 380.9L376.1 396L376.5 389.2L377 398.2L377.4 397.9L377.9 391.5L378.3 402L378.7 385.7L379.2 392.7L379.6 386L380.1 402.1L380.5 391.2L380.9 403.2L381.4 405.7L381.8 400L382.3 398.3L382.7 396.1L383.1 397.9L383.6 403.6L384 393.4L384.5 402.1L384.9 400.4L385.3 391.3L385.8 391.9L386.2 391.4L386.7 387.1L387.1 387.7L387.5 399.6L388 385.4L388.4 393.8L388.9 392.9L389.3 397.5L389.8 396L390.2 393.1L390.6 403.1L391.1 390L391.5 382.3L392 389.6L392.4 389.9L392.8 392.3L393.3 401.9L393.7 392.8L394.2 397.3L394.6 390.1L395 390.3L395.5 394.9L395.9 391L396.4 402L396.8 389.7L397.2 387.6L397.7 388.9L398.1 390.4L398.6 399L399 389.6L399.4 396.1L399.9 403.1L400.3 396.1L400.8 389.9L401.2 393.7L401.6 391.1L402.1 405.7L402.5 387.3L403 383.4L403.4 395.7L403.8 387.3L404.3 402.2L404.7 398.1L405.2 401.3L405.6 391L406 386L406.5 386.5L406.9 402.7L407.4 390L407.8 394.4L408.2 399.8L408.7 385.8L409.1 392.2L409.6 401.6L410 396.1L410.5 389.8L410.9 383L411.3 399.6L411.8 392.1L412.2 402.5L412.7 388.3L413.1 404.9L413.5 387.4L414 394.7L414.4 392.3L414.9 393.7L415.3 396.2L415.7 397.3L416.2 400.9L416.6 400L417.1 404.3L417.5 400.7L417.9 394L418.4 395.3L418.8 393.8L419.3 394.1L419.7 387L420.1 380.7L420.6 399.3L421 392.9L421.5 386.2L421.9 398.6L422.3 390.6L422.8 391.7L423.2 392.2L423.7 393.8L424.1 390.5L424.5 396.7L425 387.1L425.4 393.2L425.9 397.4L426.3 391.6L426.7 391L427.2 386.9L427.6 392.2L428.1 394.7L428.5 399.1L428.9 398.5L429.4 401.5L429.8 395.7L430.3 392.2L430.7 397.1L431.1 403.3L431.6 405.7L432 391.4L432.5 401.1L432.9 394.4L433.4 390.1L433.8 389.6L434.2 395.8L434.7 389.3L435.1 398.8L435.6 389.7L436 394.1L436.4 404.8L436.9 391.3L437.3 402.3L437.8 388.4L438.2 385.4L438.6 393.5L439.1 403.9L439.5 397L440 400.2L440.4 391.9L440.8 401.9L441.3 394.3L441.7 389.9L442.2 405.7L442.6 395.2L443 405.7L443.5 393.2L443.9 391.9L444.4 385L444.8 391.4L445.2 398.9L445.7 401.3L446.1 388.8L446.6 398.3L447 401.1L447.4 399L447.9 388.9L448.3 387.2L448.8 396.7L449.2 396.5L449.6 394.9L450.1 390.5L450.5 405.6L451 392.1L451.4 389.3L451.8 398.8L452.3 398L452.7 388.9L453.2 397.3L453.6 397.6L454 389.9L454.5 395.9L454.9 392.6L455.4 398.5L455.8 392.1L456.3 397.8L456.7 391.2L457.1 396.6L457.6 389.1L458 394.5L458.5 389.8L458.9 397.3L459.3 393.6L459.8 400.3L460.2 394.9L460.7 387.6L461.1 401.5L461.5 395.2L462 390.3L462.4 401.2L462.9 397L463.3 390.7L463.7 397.2L464.2 403.3L464.6 394.5L465.1 395.2L465.5 387.8L465.9 391.9L466.4 390.3L466.8 396.7L467.3 387.7L467.7 389.8L468.1 402.7L468.6 392.9L469 389.8L469.5 394.2L469.9 387.7L470.3 399.2L470.8 394.4L471.2 386.5L471.7 398.3L472.1 389.9L472.5 395.9L473 391.7L473.4 389.8L473.9 391.8L474.3 402.4L474.7 402.8L475.2 390L475.6 393.4L476.1 402.9L476.5 403.5L477 397.4L477.4 402.2L477.8 389.6L478.3 401.8L478.7 389.5L479.2 394.2L479.6 396.4L480 393.7L480.5 393.7L480.9 400L481.4 397.8L481.8 405L482.2 404.8L482.7 390.9L483.1 391.9L483.6 393.8L484 404.5L484.4 394.7L484.9 393.9L485.3 397.6L485.8 398.5L486.2 393.3L486.6 404.6L487.1 397.2L487.5 400.6L488 397.7L488.4 396.5L488.8 399.2L489.3 391.9L489.7 391.5L490.2 393.5L490.6 393.2L491 398.4L491.5 402.4L491.9 392.7L492.4 403.9L492.8 395.1L493.2 394.4L493.7 402.3L494.1 400.2L494.6 392.3L495 388.2L495.4 395.5L495.9 393.8L496.3 391.3L496.8 395.1L497.2 397.5L497.6 395.1L498.1 389.2L498.5 393.2L499 397.5L499.4 395.4L499.9 403L500.3 403L500.7 390.8L501.2 399.4L501.6 396.4L502.1 389L502.5 400.5L502.9 392.7L503.4 384.6L503.8 394L504.3 391.1L504.7 391.4L505.1 391.8L505.6 395.4L506 395.8L506.5 401.7L506.9 381.5L507.3 392.3L507.8 402L508.2 388.7L508.7 400.9L509.1 392.6L509.5 396.8L510 388L510.4 391.7L510.9 399.1L511.3 384.8L511.7 392.3L512.2 395L512.6 394.8L513.1 397.8L513.5 388.7L513.9 398.9L514.4 401.4L514.8 396.9L515.3 391.7L515.7 391.9L516.1 396.8L516.6 399.6L517 394.5L517.5 397.7L517.9 391.9L518.3 391.6L518.8 393.3L519.2 388.5L519.7 393.4L520.1 389.5L520.6 394.5L521 401.3L521.4 395.1L521.9 393.2L522.3 398.1L522.8 402.2L523.2 399.6L523.6 393L524.1 401L524.5 404.1L525 390.6L525.4 389.3L525.8 391.4L526.3 392.6L526.7 394L527.2 397.4L527.6 395.6L528 394.3L528.5 400.8L528.9 402.8L529.4 395.3L529.8 396.5L530.2 390.6L530.7 399.3L531.1 398.5L531.6 403.6L532 404.8L532.4 403.6L532.9 397.1L533.3 391.2L533.8 404L534.2 403.6L534.6 395.4L535.1 401.8L535.5 405.3L536 393.9L536.4 404.4L536.8 400L537.3 395.4L537.7 394.7L538.2 392.1L538.6 397.1L539 403.6L539.5 405.3L539.9 397L540.4 397.9L540.8 402L541.2 403.7L541.7 401.5L542.1 402.5L542.6 401.6L543 401.5L543.5 394.2L543.9 397.8L544.3 393.4L544.8 398.2L545.2 401.2L545.7 390.2L546.1 394.8L546.5 392.6L547 401.1L547.4 390.9L547.9 396.1L548.3 398.9L548.7 401.2L549.2 402.9L549.6 403.4L550.1 401.6L550.5 399.6L550.9 387.7L551.4 398.7L551.8 403.2L552.3 402L552.7 403.5L553.1 403.9L553.6 388.1L554 381.5L554.5 402.9L554.9 392.7L555.3 391.3L555.8 396.7L556.2 405.1L556.7 403.2L557.1 397.6L557.5 391.4L558 387.9L558.4 394.7L558.9 392L559.3 403.3L559.7 397.3L560.2 397.3L560.6 401L561.1 396.7L561.5 397L561.9 390.7L562.4 403.7L562.8 400.5L563.3 402.1L563.7 401.8L564.1 400.7L564.6 400L565 392.1L565.5 401.1L565.9 399.1L566.4 403.7L566.8 403.2L567.2 403.4L567.7 398.6L568.1 402.2L568.6 402.6L569 399.1L569.4 405.7L569.9 394.2L570.3 405L570.8 400L571.2 391.9L571.6 403.2L572.1 405.2L572.5 399.1L573 396L573.4 399.4L573.8 401.1L574.3 394.6L574.7 396.2L575.2 399L575.6 395L576 391.4L576.5 387.7L576.9 398.3L577.4 395L577.8 397.1L578.2 402.4L578.7 391.3L579.1 402.2L579.6 393.6L580 398L580.4 392.4L580.9 396.2L581.3 391.7L581.8 396L582.2 400.3L582.6 393.3L583.1 392.7L583.5 397.3L584 391.2L584.4 394.5L584.8 391.8L585.3 402.7L585.7 392.3L586.2 394.6L586.6 392L587.1 399.9L587.5 397.6L587.9 393.1L588.4 396.3L588.8 401.2L589.3 401.4L589.7 392.8L590.1 396.7L590.6 405.2L591 402.4L591.5 397.6L591.9 402.4L592.3 398.2L592.8 395.9L593.2 403.9L593.7 400.7L594.1 391.9L594.5 403.2L595 401.7L595.4 392.1L595.9 394.8L596.3 398L596.7 392.7L597.2 401.8L597.6 405.3L598.1 393.8L598.5 396.8L598.9 401.5L599.4 398.2L599.8 405.4L600.3 401.8L600.7 398.7L601.1 394.8L601.6 401.8L602 405.7L602.5 405.3L602.9 401.8L603.3 397.6L603.8 396L604.2 397L604.7 393.6L605.1 396L605.5 396.3L606 396.4L606.4 395.5L606.9 394.6L607.3 390.7L607.7 402.1L608.2 395.3L608.6 402.4L609.1 401.8L609.5 391.6L610 399.2L610.4 397L610.8 402.6L611.3 398.7L611.7 404.8L612.2 397.4L612.6 392.5L613 396.3L613.5 396.6L613.9 398.5L614.4 402.5L614.8 396.4L615.2 401.9L615.7 402.5L616.1 399.9L616.6 394L617 396.9L617.4 397.4L617.9 404.3L618.3 393.8L618.8 399L619.2 395.8L619.6 397.2L620.1 393.6L620.5 403.7L621 403.1L621.4 401.6L621.8 403.2L622.3 397.9L622.7 405.4L623.2 405.7L623.6 400.5L624 405.7L624.5 397.1L624.9 403.3L625.4 403.5L625.8 399.2L626.2 393.7L626.7 403L627.1 403.2L627.6 400.6L628 394.9L628.4 393L628.9 402.5L629.3 403.4L629.8 399.8L630.2 399.6L630.7 393.3L631.1 394.7L631.5 394L632 398.9L632.4 398.6L632.9 392.4L633.3 405.4L633.7 405.7L634.2 405.7L634.6 395.4L635.1 398.7L635.5 396.1L635.9 396.6L636.4 393.9L636.8 397.2L637.3 399.1L637.7 401.6L638.1 397.2L638.6 400.7L639 391.6L639.5 389L639.9 401.4L640.3 398.5L640.8 399.2L641.2 398.1L641.7 393.3L642.1 401.5L642.5 397.2L643 398.7L643.4 392.4L643.9 401.5L644.3 396L644.7 404.1L645.2 397.6L645.6 393.3L646.1 396.9L646.5 405.5L646.9 392.6L647.4 398.3L647.8 397.9L648.3 392.7L648.7 397.1L649.1 402.3L649.6 399L650 394.8L650.5 399.4L650.9 402L651.3 399.2L651.8 403.4L652.2 403.9L652.7 403.7L653.1 397.9L653.6 400.2L654 402.1L654.4 395.4L654.9 397.3L655.3 394.6L655.8 403L656.2 396.7L656.6 400.8L657.1 398.3L657.5 398.5L658 396.3L658.4 396.2L658.8 391.7L659.3 395.7L659.7 399.5L660.2 393.8L660.6 402.9L661 394.7L661.5 397.8L661.9 402.1L662.4 395.5L662.8 405L663.2 405.7L663.7 403.1L664.1 400L664.6 398.3L665 402.6L665.4 398.7L665.9 394.2L666.3 394.2L666.8 396.8L667.2 402.9L667.6 399.9L668.1 395.7L668.5 394.6L669 394L669.4 400.7L669.8 401L670.3 401.6L670.7 396.1L671.2 393.4L671.6 398.8L672 400.4L672.5 397.7L672.9 400.4L673.4 399.6L673.8 404.9L674.2 405.7L674.7 401.6L675.1 403L675.6 404.2L676 393.9L676.5 397L676.9 401.1L677.3 392.6L677.8 403.7L678.2 400.2L678.7 393L679.1 392.5L679.5 394.8L680 402.5L680.4 397.7L680.9 404L681.3 404.4L681.7 393.6L682.2 404.8L682.6 403.8L683.1 402.7L683.5 395.3L683.9 396.4L684.4 401.2L684.8 398.9L685.3 392.1L685.7 401.8L686.1 403.4L686.6 393L687 403.3L687.5 391.8L687.9 401.1L688.3 404.4L688.8 396.5L689.2 395.8L689.7 401.2L690.1 402.9L690.5 392.4L691 401.2L691.4 401.6L691.9 399.6L692.3 401.3L692.7 401.2L693.2 389.5L693.6 402.9L694.1 393.7L694.5 397.9L694.9 404.6L695.4 403.2L695.8 397.1L696.3 398.2L696.7 401.9L697.2 401.5L697.6 393.6L698 396.4L698.5 397.5L698.9 394.5L699.4 403.3L699.8 402.2L700.2 395.7L700.7 401.5L701.1 402L701.6 396.8L702 394.7L702.4 396.3L702.9 396.9L703.3 400.3L703.8 397.5L704.2 403.9L704.6 402.9L705.1 403.7L705.5 398L706 394.5L706.4 396.4L706.8 403.7L707.3 399.9L707.7 403.6L708.2 397L708.6 390.9L709 404.5L709.5 403.8L709.9 405.7L710.4 402.8L710.8 402.4L711.2 400.2L711.7 397L712.1 393.9L712.6 395.1L713 397.6L713.4 400.5L713.9 403.3L714.3 398L714.8 404.5L715.2 404.8L715.6 397.6L716.1 403.5L716.5 394.9L717 397.6L717.4 399.1L717.8 393.9L718.3 404.2L718.7 402.1L719.2 399.3L719.6 393.6L720.1 404.9L720.5 399.1L720.9 394.7L721.4 404.5L721.8 397L722.3 397.4L722.7 401.7L723.1 400L723.6 395.3L724 400.8L724.5 400.4L724.9 398.5L725.3 405L725.8 396.1L726.2 405.5L726.7 393.5L727.1 393.3L727.5 395.3L728 394L728.4 397.7L728.9 401.6L729.3 397.8L729.7 397L730.2 403.3L730.6 396L731.1 402.5L731.5 399.8L731.9 402.9L732.4 402.2L732.8 395.4L733.3 396.9L733.7 405.5L734.1 396.4L734.6 394L735 396.4L735.5 396.4L735.9 401.7L736.3 397.5L736.8 401.2L737.2 394.5L737.7 396.9L738.1 401.9L738.5 394.8L739 395.5L739.4 402.1L739.9 402.4L740.3 404.5L740.8 395.3L741.2 404L741.6 401.8L742.1 396.6L742.5 401.8L743 402.2L743.4 405.2L743.8 405L744.3 398.7L744.7 404.2L745.2 393.8L745.6 405.1L746 400.7L746.5 403L746.9 395L747.4 396.5L747.8 404.3L748.2 390.1L748.7 404.4L749.1 397.3L749.6 396.9L750 399L750.4 400.2L750.9 400.7L751.3 400L751.8 405.7L752.2 397.6L752.6 397.7L753.1 398.5L753.5 403.7L754 404L754.4 395.3L754.8 395.5L755.3 397.5L755.7 396.9L756.2 401.1L756.6 396L757 397.7L757.5 401.4L757.9 398.4L758.4 405.5L758.8 401.8L759.2 396.2L759.7 401.3L760.1 400.1L760.6 400L761 395.7L761.4 404.4L761.9 398.4L762.3 401.2L762.8 403.4L763.2 405.7L763.7 398.3L764.1 403.7L764.5 398.8L765 401.2L765.4 401.4L765.9 395.5L766.3 405.2L766.7 399.6L767.2 401.7L767.6 404.9L768.1 402.2L768.5 397.2L768.9 404.4L769.4 398.5L769.8 403.5L770.3 399.6L770.7 399.4L771.1 405L771.6 396.1L772 400.7L772.5 402.2L772.9 401.8L773.3 392.9L773.8 393L774.2 390.8L774.7 401.2L775.1 395.7L775.5 404.4L776 395.4L776.4 405.2L776.9 405.7L777.3 392.7L777.7 401.1L778.2 405.7L778.6 402.8L779.1 395.2L779.5 396.8L779.9 404.7L780.4 396.1L780.8 400.4L781.3 393.7L781.7 401.1L782.1 401.3L782.6 398.2L783 399.9L783.5 402.3L783.9 399.7L784.4 398.1L784.8 401L785.2 395.7L785.7 397.2L786.1 397.2L786.6 397.7L787 402.7L787.4 397.3L787.9 403.1L788.3 403.4L788.8 400.4L789.2 404.2L789.6 404.3L790.1 399.2L790.5 394.4L791 404.7L791.4 400.5L791.8 404.6L792.3 399.1L792.7 397.9L793.2 398.8L793.6 403.9L794 396.4L794.5 399.3L794.9 398.6L795.4 397.2L795.8 394.5L796.2 400.4L796.7 395.3L797.1 403.8L797.6 400.7L798 403.5L798.4 400.9L798.9 394.8L799.3 394.5L799.8 400.6L800.2 402.4L800.6 401.5L801.1 393.6L801.5 400.1L802 403.4L802.4 396.1L802.8 399.8L803.3 400.7L803.7 394.9L804.2 397L804.6 405.6L805 394L805.5 400.8L805.9 404L806.4 395.5L806.8 394.6L807.3 398.1L807.7 397.1L808.1 403.2L808.6 394.6L809 398.5L809.5 404.6L809.9 398.7L810.3 404.6L810.8 394.5L811.2 397.4L811.7 401L812.1 396.6L812.5 396.8L813 398.4L813.4 403.6L813.9 405.5L814.3 397.4L814.7 396.8L815.2 402.7L815.6 402.6L816.1 402.6L816.5 403.8L816.9 396.5L817.4 400.6L817.8 398.1L818.3 399.2L818.7 404.8L819.1 405.4L819.6 404L820 399.7L820.5 398.3L820.9 394.8L821.3 395.5L821.8 397.2L822.2 401L822.7 401.3L823.1 397.5L823.5 401.9L824 397.5L824.4 397.9L824.9 404.2L825.3 397.6L825.7 405.7L826.2 403.2L826.6 396.2L827.1 399.6L827.5 397.6L827.9 396.8L828.4 404.1L828.8 398.4L829.3 403.1L829.7 405.7L830.2 405.7L830.6 405.7L831 400.3L831.5 399.5L831.9 397.3L832.4 403.7L832.8 398.3L833.2 403.4L833.7 402.8L834.1 399L834.6 402.1L835 395.2L835.4 402.5L835.9 403L836.3 395.4L836.8 395.3L837.2 402.8L837.6 400.8L838.1 398.8L838.5 403.5L839 400.3L839.4 395.7L839.8 395.9L840.3 403L840.7 401.5L841.2 402.1L841.6 397.7L842 404.1L842.5 395.4L842.9 404.8L843.4 392.6L843.8 399.4L844.2 396.6L844.7 399.9L845.1 396.8L845.6 400.3L846 403.5L846.4 401.2L846.9 399.4L847.3 399.8L847.8 397.7L848.2 400.4L848.6 402.3L849.1 401.2L849.5 401.3L850 405.7L850.4 403.1L850.9 400.4L851.3 399.3L851.7 401.9L852.2 398.5L852.6 401.1L853.1 402.7" fill="none" stroke="#36f236" stroke-width="0.85" stroke-linejoin="round"/>
<line x1="85.8" y1="256.4" x2="85.8" y2="407" stroke="#48e848" stroke-width="1"/>
<polyline points="85.8,256.4 134,256.4" fill="none" stroke="#cfcfcf" stroke-width="0.9"/>
<polyline points="68.9,313.5 79.4,324.2 99.2,324.2" fill="none" stroke="#bdbdbd" stroke-width="0.9"/>
<circle cx="79.4" cy="324.2" r="1.6" fill="#e0e0e0"/>
<text x="135.8" y="251.27" font-size="7.0" fill="#dedbc0" textLength="31.5" lengthAdjust="spacingAndGlyphs">15.234Hz,</text><text x="167.3" y="251.13" font-size="6.6" fill="#cdda70" textLength="55.5" lengthAdjust="spacingAndGlyphs">保持架对内特征频率</text>
<text x="61.2" y="309.52" font-size="7.0" fill="#dedbc0" textLength="64.4" lengthAdjust="spacingAndGlyphs">9.766Hz,7.034m/s^2</text>
<text x="102.4" y="327.52" font-size="7.0" fill="#dedbc0" textLength="28" lengthAdjust="spacingAndGlyphs">9.766Hz,</text><text x="130.5" y="327.38" font-size="6.6" fill="#cdda70" textLength="56" lengthAdjust="spacingAndGlyphs">保持架对外特征频率</text>
<rect x="57.5" y="241.5" width="796.0" height="166.0" fill="none" stroke="#9a9a9a" stroke-width="1"/>
<text x="53.5" y="41.10" font-size="7.2" fill="#ececec" text-anchor="end" >11.248</text><line x1="54" y1="37.6" x2="57.6" y2="37.6" stroke="#aaa" stroke-width="0.8"/><text x="53.5" y="58.49" font-size="7.2" fill="#ececec" text-anchor="end" >10</text><line x1="54" y1="55.9" x2="57.6" y2="55.9" stroke="#aaa" stroke-width="0.8"/><text x="53.5" y="87.81" font-size="7.2" fill="#ececec" text-anchor="end" >8</text><line x1="54" y1="85.2" x2="57.6" y2="85.2" stroke="#aaa" stroke-width="0.8"/><text x="53.5" y="117.13" font-size="7.2" fill="#ececec" text-anchor="end" >6</text><line x1="54" y1="114.5" x2="57.6" y2="114.5" stroke="#aaa" stroke-width="0.8"/><text x="53.5" y="146.45" font-size="7.2" fill="#ececec" text-anchor="end" >4</text><line x1="54" y1="143.9" x2="57.6" y2="143.9" stroke="#aaa" stroke-width="0.8"/><text x="53.5" y="175.77" font-size="7.2" fill="#ececec" text-anchor="end" >2</text><line x1="54" y1="173.2" x2="57.6" y2="173.2" stroke="#aaa" stroke-width="0.8"/><text x="53.5" y="205.09" font-size="7.2" fill="#ececec" text-anchor="end" >0</text><line x1="54" y1="202.5" x2="57.6" y2="202.5" stroke="#aaa" stroke-width="0.8"/><text x="58.599999999999994" y="213.59" font-size="7.2" fill="#ececec" text-anchor="middle" >0Hz</text><text x="97.6" y="213.59" font-size="7.2" fill="#ececec" text-anchor="middle" >1000</text><text x="137.39999999999998" y="213.59" font-size="7.2" fill="#ececec" text-anchor="middle" >2000</text><text x="177.2" y="213.59" font-size="7.2" fill="#ececec" text-anchor="middle" >3000</text><text x="217.0" y="213.59" font-size="7.2" fill="#ececec" text-anchor="middle" >4000</text><text x="256.79999999999995" y="213.59" font-size="7.2" fill="#ececec" text-anchor="middle" >5000</text><text x="296.59999999999997" y="213.59" font-size="7.2" fill="#ececec" text-anchor="middle" >6000</text><text x="336.4" y="213.59" font-size="7.2" fill="#ececec" text-anchor="middle" >7000</text><text x="376.2" y="213.59" font-size="7.2" fill="#ececec" text-anchor="middle" >8000</text><text x="415.99999999999994" y="213.59" font-size="7.2" fill="#ececec" text-anchor="middle" >9000</text><text x="455.79999999999995" y="213.59" font-size="7.2" fill="#ececec" text-anchor="middle" >10000</text><text x="495.59999999999997" y="213.59" font-size="7.2" fill="#ececec" text-anchor="middle" >11000</text><text x="535.4" y="213.59" font-size="7.2" fill="#ececec" text-anchor="middle" >12000</text><text x="575.1999999999999" y="213.59" font-size="7.2" fill="#ececec" text-anchor="middle" >13000</text><text x="614.9999999999999" y="213.59" font-size="7.2" fill="#ececec" text-anchor="middle" >14000</text><text x="654.7999999999998" y="213.59" font-size="7.2" fill="#ececec" text-anchor="middle" >15000</text><text x="694.5999999999999" y="213.59" font-size="7.2" fill="#ececec" text-anchor="middle" >16000</text><text x="734.3999999999999" y="213.59" font-size="7.2" fill="#ececec" text-anchor="middle" >17000</text><text x="774.1999999999998" y="213.59" font-size="7.2" fill="#ececec" text-anchor="middle" >18000</text><text x="857.5" y="213.59" font-size="7.2" fill="#ececec" text-anchor="end" >19999.60</text><line x1="57.8" y1="202.5" x2="57.8" y2="207.0" stroke="#aaa" stroke-width="0.8"/><line x1="97.6" y1="202.5" x2="97.6" y2="207.0" stroke="#aaa" stroke-width="0.8"/><line x1="137.4" y1="202.5" x2="137.4" y2="207.0" stroke="#aaa" stroke-width="0.8"/><line x1="177.2" y1="202.5" x2="177.2" y2="207.0" stroke="#aaa" stroke-width="0.8"/><line x1="217.0" y1="202.5" x2="217.0" y2="207.0" stroke="#aaa" stroke-width="0.8"/><line x1="256.8" y1="202.5" x2="256.8" y2="207.0" stroke="#aaa" stroke-width="0.8"/><line x1="296.6" y1="202.5" x2="296.6" y2="207.0" stroke="#aaa" stroke-width="0.8"/><line x1="336.4" y1="202.5" x2="336.4" y2="207.0" stroke="#aaa" stroke-width="0.8"/><line x1="376.2" y1="202.5" x2="376.2" y2="207.0" stroke="#aaa" stroke-width="0.8"/><line x1="416.0" y1="202.5" x2="416.0" y2="207.0" stroke="#aaa" stroke-width="0.8"/><line x1="455.8" y1="202.5" x2="455.8" y2="207.0" stroke="#aaa" stroke-width="0.8"/><line x1="495.6" y1="202.5" x2="495.6" y2="207.0" stroke="#aaa" stroke-width="0.8"/><line x1="535.4" y1="202.5" x2="535.4" y2="207.0" stroke="#aaa" stroke-width="0.8"/><line x1="575.2" y1="202.5" x2="575.2" y2="207.0" stroke="#aaa" stroke-width="0.8"/><line x1="615.0" y1="202.5" x2="615.0" y2="207.0" stroke="#aaa" stroke-width="0.8"/><line x1="654.8" y1="202.5" x2="654.8" y2="207.0" stroke="#aaa" stroke-width="0.8"/><line x1="694.6" y1="202.5" x2="694.6" y2="207.0" stroke="#aaa" stroke-width="0.8"/><line x1="734.4" y1="202.5" x2="734.4" y2="207.0" stroke="#aaa" stroke-width="0.8"/><line x1="774.2" y1="202.5" x2="774.2" y2="207.0" stroke="#aaa" stroke-width="0.8"/><text x="53.5" y="243.70" font-size="7.2" fill="#ececec" text-anchor="end" >14.101</text><line x1="54" y1="241.1" x2="57.6" y2="241.1" stroke="#aaa" stroke-width="0.8"/><text x="53.5" y="262.59" font-size="7.2" fill="#ececec" text-anchor="end" >12.5</text><line x1="54" y1="260.0" x2="57.6" y2="260.0" stroke="#aaa" stroke-width="0.8"/><text x="53.5" y="292.09" font-size="7.2" fill="#ececec" text-anchor="end" >10</text><line x1="54" y1="289.5" x2="57.6" y2="289.5" stroke="#aaa" stroke-width="0.8"/><text x="53.5" y="321.59" font-size="7.2" fill="#ececec" text-anchor="end" >7.5</text><line x1="54" y1="319.0" x2="57.6" y2="319.0" stroke="#aaa" stroke-width="0.8"/><text x="53.5" y="351.09" font-size="7.2" fill="#ececec" text-anchor="end" >5</text><line x1="54" y1="348.5" x2="57.6" y2="348.5" stroke="#aaa" stroke-width="0.8"/><text x="53.5" y="380.59" font-size="7.2" fill="#ececec" text-anchor="end" >2.5</text><line x1="54" y1="378.0" x2="57.6" y2="378.0" stroke="#aaa" stroke-width="0.8"/><text x="53.5" y="410.09" font-size="7.2" fill="#ececec" text-anchor="end" >0</text><line x1="54" y1="407.5" x2="57.6" y2="407.5" stroke="#aaa" stroke-width="0.8"/><text x="68.7" y="418.19" font-size="7.2" fill="#ececec" text-anchor="middle" >0Hz</text><line x1="68.7" y1="407.5" x2="68.7" y2="411.0" stroke="#aaa" stroke-width="0.8"/><text x="123.75" y="418.19" font-size="7.2" fill="#ececec" text-anchor="middle" >50</text><line x1="123.8" y1="407.5" x2="123.8" y2="411.0" stroke="#aaa" stroke-width="0.8"/><text x="178.8" y="418.19" font-size="7.2" fill="#ececec" text-anchor="middle" >100</text><line x1="178.8" y1="407.5" x2="178.8" y2="411.0" stroke="#aaa" stroke-width="0.8"/><text x="233.85000000000002" y="418.19" font-size="7.2" fill="#ececec" text-anchor="middle" >150</text><line x1="233.9" y1="407.5" x2="233.9" y2="411.0" stroke="#aaa" stroke-width="0.8"/><text x="288.9" y="418.19" font-size="7.2" fill="#ececec" text-anchor="middle" >200</text><line x1="288.9" y1="407.5" x2="288.9" y2="411.0" stroke="#aaa" stroke-width="0.8"/><text x="343.95" y="418.19" font-size="7.2" fill="#ececec" text-anchor="middle" >250</text><line x1="343.9" y1="407.5" x2="343.9" y2="411.0" stroke="#aaa" stroke-width="0.8"/><text x="399.0" y="418.19" font-size="7.2" fill="#ececec" text-anchor="middle" >300</text><line x1="399.0" y1="407.5" x2="399.0" y2="411.0" stroke="#aaa" stroke-width="0.8"/><text x="454.04999999999995" y="418.19" font-size="7.2" fill="#ececec" text-anchor="middle" >350</text><line x1="454.0" y1="407.5" x2="454.0" y2="411.0" stroke="#aaa" stroke-width="0.8"/><text x="509.09999999999997" y="418.19" font-size="7.2" fill="#ececec" text-anchor="middle" >400</text><line x1="509.1" y1="407.5" x2="509.1" y2="411.0" stroke="#aaa" stroke-width="0.8"/><text x="564.15" y="418.19" font-size="7.2" fill="#ececec" text-anchor="middle" >450</text><line x1="564.1" y1="407.5" x2="564.1" y2="411.0" stroke="#aaa" stroke-width="0.8"/><text x="619.2" y="418.19" font-size="7.2" fill="#ececec" text-anchor="middle" >500</text><line x1="619.2" y1="407.5" x2="619.2" y2="411.0" stroke="#aaa" stroke-width="0.8"/><text x="674.25" y="418.19" font-size="7.2" fill="#ececec" text-anchor="middle" >550</text><line x1="674.2" y1="407.5" x2="674.2" y2="411.0" stroke="#aaa" stroke-width="0.8"/><text x="729.3000000000001" y="418.19" font-size="7.2" fill="#ececec" text-anchor="middle" >600</text><line x1="729.3" y1="407.5" x2="729.3" y2="411.0" stroke="#aaa" stroke-width="0.8"/><text x="784.35" y="418.19" font-size="7.2" fill="#ececec" text-anchor="middle" >650</text><line x1="784.4" y1="407.5" x2="784.4" y2="411.0" stroke="#aaa" stroke-width="0.8"/><text x="839.4" y="418.19" font-size="7.2" fill="#ececec" text-anchor="middle" >700</text><line x1="839.4" y1="407.5" x2="839.4" y2="411.0" stroke="#aaa" stroke-width="0.8"/>
<text transform="translate(28.3,120) rotate(-90)" font-size="7.6" fill="#ececec" text-anchor="middle">[m/s^2]RMS</text>
<text transform="translate(28.3,324) rotate(-90)" font-size="8" fill="#ececec" text-anchor="middle">[m/s^2]</text>
<g transform="translate(840,19.6)" stroke="#b6c2e6" stroke-width="1.1" fill="none">
<path d="M0.5 4V0.5H4 M0.5 0.5L4.3 4.3"/><path d="M11.5 4V0.5H8 M11.5 0.5L7.7 4.3"/>
<path d="M0.5 8V11.5H4 M0.5 11.5L4.3 7.7"/><path d="M11.5 8V11.5H8 M11.5 11.5L7.7 7.7"/></g>
<g transform="translate(840,223.7)" stroke="#b6c2e6" stroke-width="1.1" fill="none">
<path d="M0.5 4V0.5H4 M0.5 0.5L4.3 4.3"/><path d="M11.5 4V0.5H8 M11.5 0.5L7.7 4.3"/>
<path d="M0.5 8V11.5H4 M0.5 11.5L4.3 7.7"/><path d="M11.5 8V11.5H8 M11.5 11.5L7.7 7.7"/></g>
<rect x="1.8" y="36.5" width="15" height="15" fill="#213f7e" stroke="#7488bd" stroke-width="1"/><rect x="8.6" y="41.5" width="1.4" height="5" fill="#4a3560"/>
<g transform="translate(0,56)"><rect x="4.3" y="0" width="1.2" height="11" fill="#a9c6ee"/>
<path d="M5.4 0.3 Q8 -0.6 10 0.8 T14.4 1 V7.4 Q12 8.6 10 7.2 T5.4 7.4Z" fill="#a9c6ee"/>
<rect x="2.2" y="10.6" width="6" height="1.3" fill="#8a4a60"/></g>
<g transform="translate(0,74.5)"><rect x="5.8" y="0.6" width="8.4" height="4.6" fill="#a9c6ee"/>
<rect x="5.2" y="0" width="9.6" height="5.8" fill="none" stroke="#5d74a8" stroke-width="0.6"/>
<path d="M3 2.5V9.6H12" stroke="#a9c6ee" stroke-width="1.1" fill="none"/></g>
<g fill="#6f92e0"><path d="M8.5 90.8l2 2.6h-4z M8.5 100.8l2 -2.6h-4z M3.5 95.8l2.6 2v-4z M13.5 95.8l-2.6 2v-4z"/><circle cx="8.5" cy="95.8" r="1.1"/></g>
<rect x="1.8" y="240.5" width="15" height="17" fill="#213f7e" stroke="#7488bd" stroke-width="1"/><rect x="8.6" y="246.5" width="1.4" height="5" fill="#4a3560"/>
<g transform="translate(0,260.2)"><rect x="2.2" y="0" width="0.9" height="12" fill="#6c86c0"/><rect x="2.2" y="11.6" width="13.5" height="0.9" fill="#6c86c0"/><rect x="5.2" y="2.2" width="1.6" height="9.3" fill="#8a3a6a"/><rect x="8.7" y="4.2" width="1.6" height="7.3" fill="#3d5fa6"/><rect x="12.2" y="4.2" width="1.6" height="7.3" fill="#3d5fa6"/></g>
<g transform="translate(0,277.4)"><rect x="2.2" y="0" width="0.9" height="12" fill="#6c86c0"/><rect x="2.2" y="11.6" width="13.5" height="0.9" fill="#6c86c0"/><rect x="5.2" y="2.2" width="1.6" height="9.3" fill="#3d5fa6"/><rect x="8.7" y="4.2" width="1.6" height="7.3" fill="#8a3a6a"/><rect x="12.2" y="4.2" width="1.6" height="7.3" fill="#3d5fa6"/></g>
<g transform="translate(0,294.5)"><rect x="4.3" y="0" width="1.2" height="11" fill="#a9c6ee"/>
<path d="M5.4 0.3 Q8 -0.6 10 0.8 T14.4 1 V7.4 Q12 8.6 10 7.2 T5.4 7.4Z" fill="#a9c6ee"/>
<rect x="2.2" y="10.6" width="6" height="1.3" fill="#8a4a60"/></g>
<g transform="translate(0,312.5)"><rect x="5.8" y="0.6" width="8.4" height="4.6" fill="#a9c6ee"/>
<rect x="5.2" y="0" width="9.6" height="5.8" fill="none" stroke="#5d74a8" stroke-width="0.6"/>
<path d="M3 2.5V9.6H12" stroke="#a9c6ee" stroke-width="1.1" fill="none"/></g>
<g fill="#6f92e0"><path d="M8.5 328.5l2 2.6h-4z M8.5 338.5l2 -2.6h-4z M3.5 333.5l2.6 2v-4z M13.5 333.5l-2.6 2v-4z"/><circle cx="8.5" cy="333.5" r="1.1"/></g>
</svg>
<div class="t" style="left:3px;top:4.4px">柠条塔煤矿/S1232工作面/转载机/电机驱动端2H/128k 加速度波形(0.1-20000)</div>
<div class="t" style="left:251px;top:4.4px">2023/07/02 02:20:13</div>
<div class="t" style="left:3px;top:21.8px">幅值谱</div>
<div class="t" style="left:33.6px;top:21.8px">179.664m/s^2</div>
<div class="t" style="left:88.7px;top:21.8px">0RPM</div>
<div class="t" style="left:116.7px;top:21.8px">7912.5Hz</div>
<div class="t" style="left:154px;top:21.8px">1.521m/s^2</div>
<div class="t" style="left:202.5px;top:21.8px">△f=1147.266Hz</div>
<div class="t" style="left:3px;top:226px">包络谱</div>
<div class="t" style="left:33.6px;top:226px">179.664m/s^2</div>
<div class="t" style="left:88.7px;top:226px">0RPM</div>
<div class="t" style="left:116.7px;top:226px">9.766Hz</div>
<div class="t" style="left:151px;top:226px">7.034m/s^2</div>
</body></html>
